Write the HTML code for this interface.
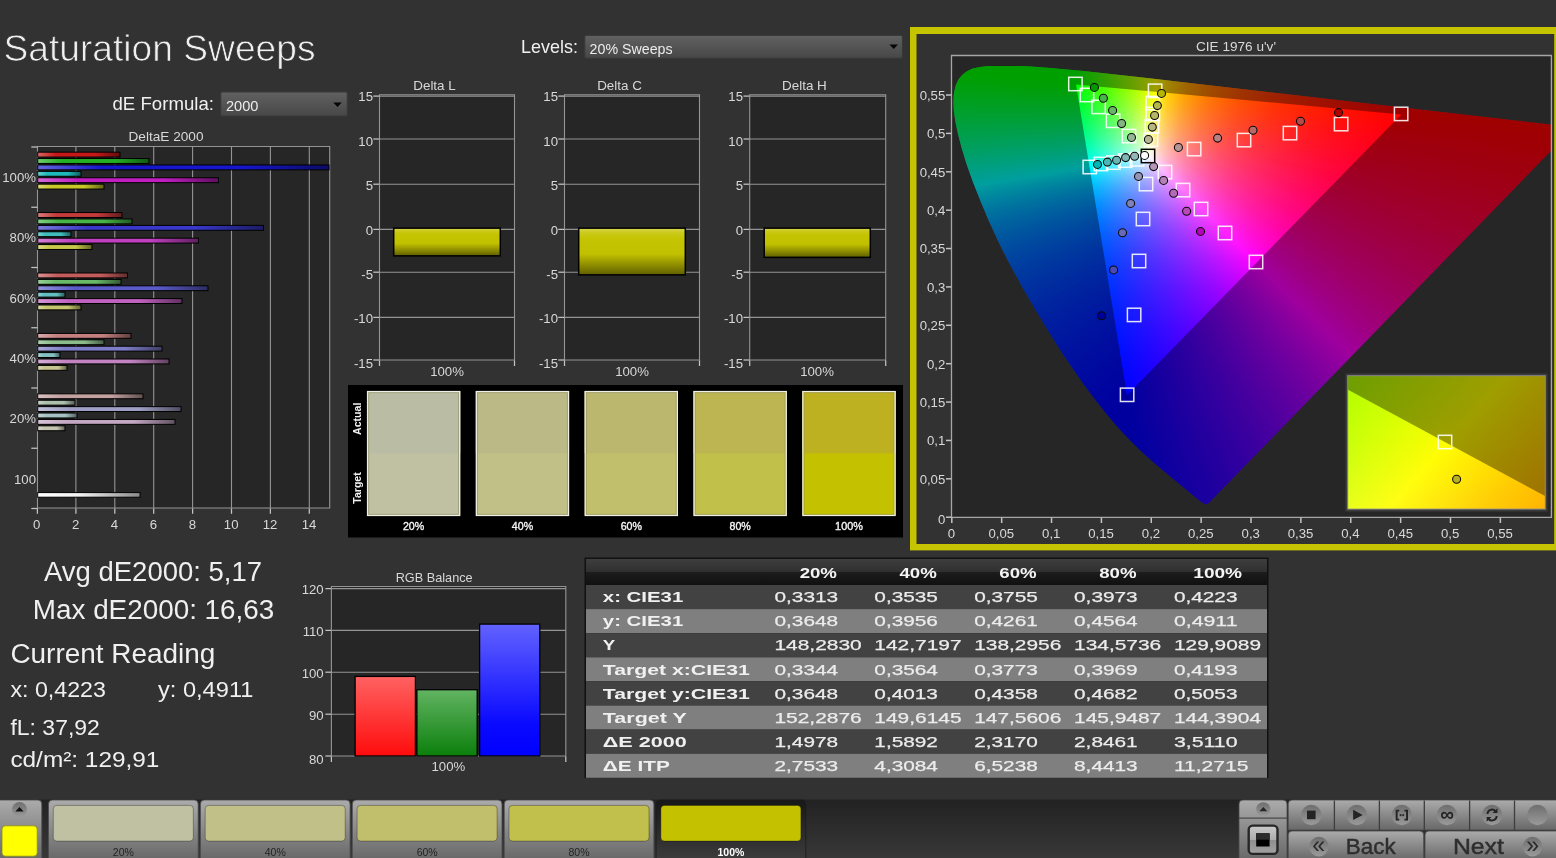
<!DOCTYPE html>
<html lang="en"><head><meta charset="utf-8"><title>Saturation Sweeps</title>
<style>
html,body{margin:0;padding:0}
body{width:1556px;height:858px;background:#323232;overflow:hidden;position:relative;font-family:"Liberation Sans",sans-serif}
.ciefill{position:absolute;overflow:hidden}
.ciefill i{display:block;height:1px}
svg{position:absolute;left:0;top:0;font-family:"Liberation Sans",sans-serif}
svg.top{will-change:transform}
</style></head><body>
<svg width="1556" height="858" viewBox="0 0 1556 858"><rect x="910" y="27" width="660" height="523.4" fill="#c6c300"/><rect x="916.5" y="34" width="637.7" height="510" fill="#323232"/><rect x="951.5" y="55.5" width="600" height="462" fill="#262626"/></svg>
<div class="ciefill" style="left:952px;top:66px;width:600px;height:438px;clip-path:polygon(256.2px 437.6px,255.4px 437.7px,254.9px 438.1px,252.8px 437.9px,248.4px 435.2px,241.6px 429.8px,205.5px 399.7px,193.8px 389.4px,183.8px 380.1px,172.7px 368.8px,164.1px 359.3px,154.4px 347.8px,143.7px 334.3px,132.4px 319.2px,120.5px 302.3px,108.1px 283.7px,95.4px 263.5px,82.6px 242.2px,69.9px 220.4px,57.8px 198.2px,52.0px 187.0px,46.6px 176.0px,36.7px 154.5px,28.1px 134.1px,20.6px 114.9px,14.4px 97.4px,9.6px 81.8px,6.0px 68.1px,3.5px 56.2px,1.9px 45.8px,1.4px 37.0px,1.7px 29.4px,2.1px 25.9px,3.6px 19.8px,5.8px 14.7px,7.2px 12.5px,10.4px 8.7px,14.2px 5.7px,16.3px 4.5px,20.7px 2.6px,28.0px 0.9px,35.9px 0.0px,47.1px -0.4px,64.2px -0.3px,79.0px 0.4px,98.4px 1.9px,131.6px 5.1px,186.2px 11.1px,621.8px 61.2px)"><i style="background:linear-gradient(90deg,#0f0 29px,#0f0 83px)"></i><i style="background:linear-gradient(90deg,#0f0 23px,#0f0 96px)"></i><i style="background:linear-gradient(90deg,#0f0 19px,#0f0 107px)"></i><i style="background:linear-gradient(90deg,#0f0 16px,#0f0 118px)"></i><i style="background:linear-gradient(90deg,#0f0 14px,#01ff00 123px,#0dff00 128px)"></i><i style="background:linear-gradient(90deg,#0f0 12px,#01ff00 123px,#26ff00 138px)"></i><i style="background:linear-gradient(90deg,#0f0 11px,#0f0 123px,#3eff00 147px)"></i><i style="background:linear-gradient(90deg,#0f0 9px,#0f0 123px,#5f0 155px,#57ff00 156px)"></i><i style="background:linear-gradient(90deg,#00ff02 8px,#0f0 123px,#51ff00 154px,#72ff00 165px)"></i><i style="background:linear-gradient(90deg,#00ff04 7px,#0f0 57px,#02ff00 124px,#57ff00 156px,#8fff00 174px)"></i><i style="background:linear-gradient(90deg,#00ff06 6px,#0f0 62px,#01ff00 124px,#57ff00 156px,#adff00 183px)"></i><i style="background:linear-gradient(90deg,#00ff08 6px,#0f0 70px,#01ff00 124px,#57ff00 156px,#b1ff00 184px,#ceff00 192px)"></i><i style="background:linear-gradient(90deg,#00ff09 5px,#0f0 79px,#01ff00 124px,#57ff00 156px,#adff00 183px,#f0ff00 201px)"></i><i style="background:linear-gradient(90deg,#00ff0b 4px,#0f0 90px,#0f0 124px,#53ff00 155px,#adff00 183px,#fffd00 205px,#fe0 209px)"></i><i style="background:linear-gradient(90deg,#00ff0d 3px,#0f0 100px,#0f0 124px,#53ff00 155px,#af0 182px,#fdff00 204px,#ffd000 218px)"></i><i style="background:linear-gradient(90deg,#00ff0f 3px,#0f0 110px,#02ff00 125px,#56ff00 156px,#aeff00 183px,#fdff00 204px,#ffc900 220px,#ffb700 227px)"></i><i style="background:linear-gradient(90deg,#0f1 3px,#0f0 121px,#01ff00 125px,#56ff00 156px,#aeff00 183px,#feff00 204px,#ffc900 220px,#ffa200 236px)"></i><i style="background:linear-gradient(90deg,#00ff13 2px,#01ff00 125px,#56ff00 156px,#aeff00 183px,#feff00 204px,#ffcb00 219px,#ff9f00 237px,#ff9100 244px)"></i><i style="background:linear-gradient(90deg,#00ff14 2px,#01ff01 125px,#56ff00 156px,#aeff00 183px,#ff0 204px,#ffce00 218px,#ffa100 236px,#ff8200 253px)"></i><i style="background:linear-gradient(90deg,#00ff16 1px,#00ff03 125px,#5f0 156px,#aeff00 183px,#ff0 204px,#ffd100 217px,#ffa500 234px,#ff7b00 257px,#ff7400 262px)"></i><i style="background:linear-gradient(90deg,#00ff18 1px,#00ff05 125px,#52ff00 155px,#af0 182px,#ff0 204px,#ffd000 217px,#ffa400 234px,#ff7b00 257px,#ff6900 270px)"></i><i style="background:linear-gradient(90deg,#00ff1a 1px,#02ff07 126px,#58ff01 157px,#b2ff00 184px,#fffe00 204px,#ffd000 217px,#ffa400 234px,#ff7a00 257px,#ff5e00 279px)"></i><i style="background:linear-gradient(90deg,#00ff1c 0px,#02ff0a 126px,#55ff04 156px,#aeff00 183px,#fffe00 204px,#ffcf00 217px,#ffa300 234px,#ff7a00 257px,#f50 288px)"></i><i style="background:linear-gradient(90deg,#00ff1d 0px,#01ff0c 126px,#55ff06 156px,#aeff00 183px,#fffd00 204px,#ffcf00 217px,#ffa300 234px,#ff7a00 257px,#ff5400 288px,#ff4d00 296px)"></i><i style="background:linear-gradient(90deg,#00ff1f 0px,#01ff0f 126px,#54ff09 156px,#abff03 182px,#fffd00 204px,#ffcf00 217px,#ffa300 234px,#ff7900 257px,#ff5400 288px,#ff4500 305px)"></i><i style="background:linear-gradient(90deg,#00ff21 0px,#0f1 126px,#54ff0b 156px,#abff06 182px,#fdff00 203px,#ffc800 219px,#ff9c00 237px,#ff7300 261px,#ff4f00 293px,#ff3e00 314px)"></i><i style="background:linear-gradient(90deg,#00ff23 0px,#00ff13 126px,#54ff0e 156px,#abff08 182px,#feff03 203px,#ffc800 219px,#ff9b00 237px,#ff7300 261px,#ff4f00 293px,#ff3700 323px)"></i><i style="background:linear-gradient(90deg,#00ff25 0px,#00ff16 126px,#4eff11 154px,#a4ff0c 180px,#feff06 203px,#ffca01 218px,#ff9f00 235px,#f70 258px,#ff5200 289px,#ff3200 331px)"></i><i style="background:linear-gradient(90deg,#00ff27 0px,#02ff18 127px,#57ff13 157px,#afff0e 183px,#feff09 203px,#ffcd04 217px,#ffa100 234px,#ff7800 257px,#ff5300 288px,#ff3200 331px,#ff2d00 340px)"></i><i style="background:linear-gradient(90deg,#00ff28 0px,#01ff1b 127px,#57ff16 157px,#afff11 183px,#ffff0c 203px,#ffcc07 217px,#ffa002 234px,#f70 257px,#ff5200 288px,#ff3100 331px,#ff2700 349px)"></i><i style="background:linear-gradient(90deg,#00ff2a 0px,#01ff1d 127px,#56ff19 157px,#afff14 183px,#ffff0f 203px,#ffcf0a 216px,#ffa205 233px,#ff7a00 255px,#f50 285px,#ff3400 327px,#ff2300 357px)"></i><i style="background:linear-gradient(90deg,#00ff2c 0px,#00ff20 127px,#56ff1b 157px,#afff17 183px,#fffe13 203px,#ffcf0d 216px,#ffa207 233px,#ff7902 255px,#ff5400 285px,#f30 327px,#ff1f00 366px)"></i><i style="background:linear-gradient(90deg,#00ff2e 0px,#0f2 127px,#56ff1e 157px,#afff1a 183px,#fffe16 203px,#ffce0f 216px,#ffa109 233px,#ff7904 255px,#ff5400 285px,#f30 327px,#ff1b00 375px)"></i><i style="background:linear-gradient(90deg,#00ff30 0px,#00ff25 127px,#4fff21 155px,#a8ff1d 181px,#fffe19 203px,#ffce12 216px,#ffa10c 233px,#ff7906 255px,#ff5400 285px,#f30 327px,#ff1700 383px)"></i><i style="background:linear-gradient(90deg,#00ff32 0px,#02ff27 128px,#56ff24 157px,#afff20 183px,#fffd1c 203px,#ffcd15 216px,#ffa00e 233px,#ff7808 255px,#ff5302 285px,#ff3200 327px,#ff1500 389px,#ff1400 392px)"></i><i style="background:linear-gradient(90deg,#00ff34 0px,#01ff2a 128px,#55ff26 157px,#acff23 182px,#fdff20 202px,#ffd719 213px,#ffa912 229px,#ff800b 250px,#ff5a05 278px,#ff3800 317px,#ff1a00 374px,#f10 401px)"></i><i style="background:linear-gradient(90deg,#00ff35 0px,#01ff2c 128px,#55ff29 157px,#acff26 182px,#fdff23 202px,#ffc619 218px,#ff9b12 235px,#ff730b 258px,#ff4f04 289px,#ff2e00 333px,#f10 398px,#ff0e00 409px)"></i><i style="background:linear-gradient(90deg,#00ff37 0px,#00ff2f 128px,#55ff2c 157px,#acff29 182px,#feff26 202px,#ffc91c 217px,#ff9d14 234px,#ff750d 256px,#ff5106 286px,#ff3000 329px,#ff1300 392px,#ff0b00 418px)"></i><i style="background:linear-gradient(90deg,#00ff39 0px,#00ff32 128px,#55ff2f 157px,#acff2c 182px,#feff2a 202px,#ffcc20 216px,#ff9f17 233px,#ff760f 255px,#ff5208 285px,#ff3102 327px,#ff1400 389px,#ff0800 427px)"></i><i style="background:linear-gradient(90deg,#00ff3b 0px,#00ff34 128px,#51ff32 156px,#a8ff2f 181px,#feff2d 202px,#ffcb22 216px,#ff9e19 233px,#ff7611 255px,#ff510a 285px,#ff3103 327px,#ff1400 389px,#ff0500 436px)"></i><i style="background:linear-gradient(90deg,#00ff3d 0px,#02ff37 129px,#58ff35 158px,#b0ff32 183px,#ffff30 202px,#ffce26 215px,#ffa21d 231px,#ff7a14 252px,#ff550c 281px,#ff3305 322px,#ff1600 382px,#ff0300 444px)"></i><i style="background:linear-gradient(90deg,#00ff3f 0px,#01ff39 129px,#57ff38 158px,#b0ff36 183px,#ffff34 202px,#ffd129 214px,#ffa41f 230px,#ff7b16 251px,#ff560e 280px,#ff3406 320px,#ff1700 379px,#ff0100 453px)"></i><i style="background:linear-gradient(90deg,#00ff41 0px,#01ff3c 129px,#54ff3b 157px,#acff39 182px,#fffe37 202px,#ffd02c 214px,#ffa422 230px,#ff7b18 251px,#ff550f 280px,#ff3407 320px,#ff1700 379px,#f00 459px,#f00 462px)"></i><i style="background:linear-gradient(90deg,#00ff43 0px,#01ff3f 129px,#54ff3e 157px,#acff3c 182px,#fffe3b 202px,#ffd02f 214px,#ffa324 230px,#ff7b1a 251px,#ff5611 279px,#ff3409 319px,#ff1702 377px,#f00 457px,#f00 470px)"></i><i style="background:linear-gradient(90deg,#00ff45 0px,#00ff42 129px,#54ff41 157px,#adff3f 182px,#fffd3e 202px,#ffcf32 214px,#ffa327 230px,#ff7a1c 251px,#ff5613 279px,#ff340a 319px,#ff1703 377px,#f00 456px,#f00 479px)"></i><i style="background:linear-gradient(90deg,#00ff47 0px,#0f4 129px,#50ff44 156px,#a9ff43 181px,#fffd41 202px,#ffcf35 214px,#ffa229 230px,#ff7a1e 251px,#ff5514 279px,#ff340b 319px,#ff1604 377px,#f00 456px,#f00 488px)"></i><i style="background:linear-gradient(90deg,#00ff49 0px,#02ff47 130px,#56ff47 158px,#adff46 182px,#fdff45 201px,#ffc836 216px,#ff9d2a 232px,#ff751f 254px,#ff5015 284px,#ff2f0b 326px,#ff1203 388px,#f00 458px,#f00 496px)"></i><i style="background:linear-gradient(90deg,#00ff4b 0px,#02ff4a 130px,#56ff4a 158px,#adff49 182px,#fdff49 201px,#ffc739 216px,#ff9d2d 232px,#ff7421 254px,#ff4f16 284px,#ff2f0d 326px,#ff1204 388px,#f00 457px,#f00 505px)"></i><i style="background:linear-gradient(90deg,#00ff4d 0px,#01ff4d 130px,#56ff4d 158px,#adff4d 182px,#feff4d 201px,#ffca3d 215px,#ff9f30 231px,#ff7724 252px,#ff5219 281px,#ff310f 322px,#ff1406 382px,#f00 455px,#f00 514px)"></i><i style="background:linear-gradient(90deg,#00ff4f 0px,#01ff4f 130px,#56ff50 158px,#adff50 182px,#feff50 201px,#ffca40 215px,#ff9e32 231px,#ff7626 252px,#ff521a 281px,#ff3110 322px,#ff1307 382px,#f00 454px,#f00 522px)"></i><i style="background:linear-gradient(90deg,#00ff51 0px,#00ff52 130px,#56ff53 158px,#adff53 182px,#ffff54 201px,#ffcd44 214px,#ffa035 230px,#ff7828 251px,#ff531c 279px,#ff3212 319px,#ff1508 378px,#ff0001 452px,#f00 531px)"></i><i style="background:linear-gradient(90deg,#00ff53 0px,#0f5 130px,#52ff56 157px,#a9ff57 181px,#ffff57 201px,#ffcf48 213px,#ffa238 229px,#ff792b 250px,#ff541e 278px,#ff3313 317px,#ff160a 375px,#ff0002 450px,#f00 540px)"></i><i style="background:linear-gradient(90deg,#0f5 0px,#00ff58 130px,#4bff59 155px,#a1ff5a 179px,#ffff5b 201px,#ffcf4b 213px,#ffa43c 228px,#ff7c2e 248px,#ff5721 275px,#ff3516 313px,#ff180b 369px,#ff0003 448px,#f00 549px)"></i><i style="background:linear-gradient(90deg,#00ff57 1px,#02ff5b 131px,#55ff5c 158px,#adff5e 182px,#fffe5f 201px,#ffcf4e 213px,#ffa33e 228px,#ff7b30 248px,#ff5623 275px,#ff3517 313px,#ff170c 369px,#ff0004 447px,#f00 557px)"></i><i style="background:linear-gradient(90deg,#00ff59 1px,#01ff5e 131px,#55ff5f 158px,#aeff61 182px,#fffe62 201px,#ffce51 213px,#ffa341 228px,#ff7b32 248px,#ff5625 275px,#ff3518 313px,#ff170d 369px,#ff0005 446px,#f00 562px,#f00 566px)"></i><i style="background:linear-gradient(90deg,#00ff5b 1px,#01ff61 131px,#55ff63 158px,#aeff65 182px,#fffd66 201px,#ffce54 213px,#ffa343 228px,#ff7a34 248px,#ff5626 275px,#ff341a 313px,#ff170e 369px,#ff0006 445px,#f00 567px,#f00 575px)"></i><i style="background:linear-gradient(90deg,#00ff5d 1px,#00ff64 131px,#54ff66 158px,#aeff68 182px,#fcff6a 200px,#ffef64 204px,#ffc052 217px,#ff9441 234px,#ff6d31 256px,#ff4a23 286px,#ff2a17 329px,#ff0e0c 393px,#ff0006 450px,#f00 577px,#f00 583px)"></i><i style="background:linear-gradient(90deg,#00ff5f 1px,#00ff67 131px,#54ff69 158px,#aeff6c 182px,#fdff6e 200px,#ffc657 215px,#ff9b46 231px,#ff7336 252px,#ff4e27 281px,#ff2e1a 322px,#ff110e 382px,#ff0007 447px,#f00 584px,#f00 592px)"></i><i style="background:linear-gradient(90deg,#00ff61 1px,#00ff6a 131px,#4dff6c 156px,#a6ff6f 180px,#fdff72 200px,#ffc95c 214px,#ff9c49 230px,#ff7438 251px,#ff5029 279px,#ff2f1c 319px,#ff1210 378px,#ff0008 446px,#f00 593px,#f00 600px)"></i><i style="background:linear-gradient(90deg,#00ff63 2px,#02ff6d 132px,#57ff70 159px,#aeff73 182px,#feff76 200px,#ffc85f 214px,#ff9c4c 230px,#ff743a 251px,#ff502b 279px,#ff2f1d 319px,#ff1211 378px,#ff0009 445px,#f00 600px)"></i><i style="background:linear-gradient(90deg,#00ff65 2px,#01ff70 132px,#57ff73 159px,#aeff77 182px,#feff7a 200px,#ffcb63 213px,#ffa050 228px,#ff783f 248px,#ff542f 275px,#ff3320 313px,#ff1513 369px,#ff000a 442px,#f00 600px)"></i><i style="background:linear-gradient(90deg,#00ff68 2px,#01ff73 132px,#57ff77 159px,#aeff7a 182px,#ffff7e 200px,#ffce68 212px,#ffa254 227px,#ff7942 247px,#ff5431 274px,#f32 312px,#ff1515 368px,#ff000a 441px,#f00 600px)"></i><i style="background:linear-gradient(90deg,#00ff6a 2px,#00ff76 132px,#53ff7a 158px,#aaff7e 181px,#ffff82 200px,#ffce6b 212px,#ffa257 227px,#ff7944 247px,#ff5433 274px,#ff3323 312px,#ff1516 368px,#ff000b 440px,#f00 600px)"></i><i style="background:linear-gradient(90deg,#00ff6c 2px,#00ff79 132px,#53ff7d 158px,#aaff82 181px,#fffe85 200px,#ffcd6e 212px,#ffa159 227px,#ff7846 247px,#ff5334 274px,#ff3225 312px,#ff1517 368px,#ff000c 439px,#f00 600px)"></i><i style="background:linear-gradient(90deg,#00ff6e 3px,#00ff7c 132px,#4fff80 157px,#a6ff85 180px,#fffe89 200px,#ffd073 211px,#ffa35d 226px,#ff7b4a 245px,#ff5638 271px,#ff3527 308px,#ff1719 362px,#ff000d 436px,#ff0001 600px)"></i><i style="background:linear-gradient(90deg,#00ff70 3px,#02ff7f 133px,#56ff84 159px,#afff89 182px,#fffd8d 200px,#ffd076 211px,#ffa360 226px,#ff7b4c 245px,#ff5639 271px,#ff3429 308px,#ff171a 362px,#ff000e 436px,#ff0001 600px)"></i><i style="background:linear-gradient(90deg,#00ff72 3px,#01ff83 133px,#56ff88 159px,#afff8d 182px,#fffd91 200px,#ffcf7a 211px,#ffa262 226px,#ff7a4e 245px,#ff563b 271px,#ff342a 308px,#ff161b 362px,#ff000f 435px,#ff0002 600px)"></i><i style="background:linear-gradient(90deg,#00ff75 3px,#01ff86 133px,#56ff8b 159px,#afff91 182px,#fdff96 199px,#ffea8b 204px,#ffbb72 217px,#ff915d 233px,#ff6a48 255px,#ff4735 285px,#ff2725 328px,#ff0b16 392px,#ff000f 439px,#ff0002 600px)"></i><i style="background:linear-gradient(90deg,#0f7 4px,#01ff89 133px,#55ff8f 159px,#afff95 182px,#fdff9a 199px,#ffc77c 213px,#ff9c65 228px,#ff7450 248px,#ff503c 275px,#ff302b 313px,#ff131c 369px,#f01 435px,#ff0003 600px)"></i><i style="background:linear-gradient(90deg,#00ff79 4px,#00ff8c 133px,#55ff92 159px,#abff98 181px,#fdff9e 199px,#ffca81 212px,#ff9e69 227px,#ff7653 247px,#ff513f 274px,#ff302d 312px,#ff131d 368px,#ff0012 434px,#ff0003 600px)"></i><i style="background:linear-gradient(90deg,#00ff7b 4px,#00ff8f 133px,#4eff95 157px,#a7ff9c 180px,#feffa3 199px,#ffca85 212px,#ff9e6c 227px,#ff7555 247px,#ff5141 274px,#ff302e 312px,#ff131e 368px,#ff0013 433px,#ff0004 600px)"></i><i style="background:linear-gradient(90deg,#00ff7d 4px,#00ff93 133px,#46ff98 155px,#9eff9f 178px,#f9ffa7 198px,#feffa7 199px,#ffcd8a 211px,#ffa070 226px,#ff7859 245px,#ff5344 271px,#ff3231 308px,#ff1520 362px,#ff0014 431px,#ff0004 600px)"></i><i style="background:linear-gradient(90deg,#00ff80 5px,#00ff96 132px,#05ff97 135px,#58ff9d 160px,#b0ffa5 182px,#ffffab 199px,#ffd090 210px,#ffa476 224px,#ff7b5e 243px,#ff5748 268px,#ff3535 303px,#ff1823 355px,#ff0015 428px,#ff0005 600px)"></i><i style="background:linear-gradient(90deg,#00ff82 5px,#0f9 130px,#01ff9a 134px,#54ffa1 159px,#abffa8 181px,#ffffaf 199px,#ffcf93 210px,#ffa479 224px,#ff7b60 243px,#ff564a 268px,#ff3536 303px,#ff1724 355px,#ff0016 427px,#ff0005 600px)"></i><i style="background:linear-gradient(90deg,#00ff84 5px,#00ff9b 128px,#01ff9d 134px,#54ffa5 159px,#abffac 181px,#fffeb4 199px,#ffcf96 210px,#ffa37c 224px,#ff7a62 243px,#ff564c 268px,#ff3437 304px,#ff1725 356px,#ff0017 427px,#ff0006 600px)"></i><i style="background:linear-gradient(90deg,#00ff87 5px,#00ff9e 126px,#00ffa0 134px,#54ffa8 159px,#acffb1 181px,#fffeb8 199px,#ffce9a 210px,#ffa37e 224px,#ff7a65 243px,#ff554e 268px,#ff3439 304px,#ff1626 356px,#ff0018 426px,#ff0007 600px)"></i><i style="background:linear-gradient(90deg,#00ff89 6px,#00ffa1 124px,#00ffa4 134px,#50ffac 158px,#a7ffb4 180px,#fffdbc 199px,#ffce9d 210px,#ffa281 224px,#ff7967 243px,#ff5550 268px,#ff333a 304px,#ff1627 356px,#ff0019 425px,#ff0007 596px,#ff0007 600px)"></i><i style="background:linear-gradient(90deg,#00ff8b 6px,#00ffa4 122px,#00ffa7 134px,#48ffaf 156px,#9fffb7 178px,#f7ffc1 197px,#fffdc0 199px,#ffcda1 210px,#ffa284 224px,#ff7969 243px,#ff5451 268px,#ff333b 304px,#ff1628 356px,#ff001a 424px,#ff0008 592px,#ff0008 600px)"></i><i style="background:linear-gradient(90deg,#00ff8e 6px,#00ffa6 120px,#02ffab 135px,#57ffb4 160px,#b0ffbd 182px,#fdffc6 198px,#ffe9b7 203px,#ffbc99 215px,#ff907c 231px,#ff6962 252px,#ff464a 281px,#ff2735 322px,#ff0b22 384px,#ff001a 428px,#ff0008 597px,#ff0008 600px)"></i><i style="background:linear-gradient(90deg,#00ff90 6px,#00ffa9 118px,#01ffae 135px,#57ffb8 160px,#b0ffc2 182px,#fdffca 198px,#ffc9a5 211px,#ff9e88 225px,#ff766d 244px,#ff5154 270px,#ff313d 306px,#ff142a 359px,#ff001b 424px,#ff0009 587px,#ff0009 600px)"></i><i style="background:linear-gradient(90deg,#00ff93 7px,#00ffac 117px,#01ffb2 135px,#56ffbc 160px,#acffc5 181px,#feffcf 198px,#ffc8a9 211px,#ff9e8b 225px,#ff756f 244px,#ff5155 270px,#ff303f 306px,#ff132a 360px,#ff001c 423px,#ff000a 584px,#ff0009 600px)"></i><i style="background:linear-gradient(90deg,#00ff95 7px,#00ffaf 115px,#00ffb5 135px,#56ffc0 160px,#acffca 181px,#feffd3 198px,#ffcbaf 210px,#ffa090 224px,#ff7773 243px,#ff5359 268px,#ff3141 304px,#ff142c 357px,#ff001d 422px,#ff000b 580px,#ff000a 600px)"></i><i style="background:linear-gradient(90deg,#00ff97 7px,#00ffb2 114px,#00ffb9 135px,#52ffc3 159px,#a8ffce 180px,#feffd8 198px,#ffcfb5 209px,#ffa295 223px,#ff7a78 241px,#ff555d 266px,#f34 301px,#ff162f 352px,#ff001f 419px,#ff000c 572px,#ff000a 600px)"></i><i style="background:linear-gradient(90deg,#00ff9a 8px,#00ffb4 113px,#00ffbd 135px,#4affc6 157px,#a3ffd1 179px,#ffd 198px,#ffceb9 209px,#ffa198 223px,#ff797a 241px,#ff545e 266px,#ff3346 301px,#ff1630 352px,#ff0020 419px,#ff000d 570px,#ff000b 600px)"></i><i style="background:linear-gradient(90deg,#00ff9c 8px,#00ffb7 111px,#02ffc1 136px,#5fc 160px,#adffd7 181px,#ffffe1 198px,#ffcdbc 209px,#ffa19b 223px,#ff797c 241px,#ff5460 266px,#ff3247 301px,#ff1531 352px,#ff0021 418px,#ff000e 567px,#ff000b 600px)"></i><i style="background:linear-gradient(90deg,#00ff9f 8px,#00ffba 110px,#01ffc4 136px,#55ffd0 160px,#adffdb 181px,#fffee6 198px,#ffcdc0 209px,#ffa09e 223px,#ff787f 241px,#ff5362 266px,#ff3249 301px,#ff1532 352px,#f02 417px,#ff000f 563px,#ff000c 600px)"></i><i style="background:linear-gradient(90deg,#00ffa1 9px,#00ffbd 109px,#01ffc8 136px,#55ffd4 160px,#adffe0 181px,#fffeea 198px,#ffccc4 209px,#ffa0a1 223px,#ff7881 241px,#ff5364 266px,#ff324a 301px,#ff1534 352px,#ff0023 416px,#ff000f 560px,#ff000c 600px)"></i><i style="background:linear-gradient(90deg,#00ffa4 9px,#00ffc0 108px,#0fc 136px,#55ffd8 160px,#adffe4 181px,#fffdef 198px,#ffccc7 209px,#ff9fa4 223px,#ff7784 241px,#ff5266 266px,#ff314c 301px,#ff1435 352px,#ff0024 415px,#ff0010 556px,#ff000d 599px)"></i><i style="background:linear-gradient(90deg,#00ffa6 9px,#00ffc2 106px,#00ffcf 136px,#51ffdb 159px,#a8ffe8 180px,#fcfff5 197px,#fff2eb 200px,#ffc4c5 211px,#ff9aa2 225px,#ff7282 244px,#ff4d64 270px,#ff2d4a 307px,#ff1033 361px,#ff0024 417px,#f01 558px,#ff000d 598px)"></i><i style="background:linear-gradient(90deg,#00ffa9 9px,#00ffc5 105px,#00ffd3 136px,#49ffde 157px,#9fffeb 178px,#fdfffa 197px,#ffe4e3 203px,#ffb6bd 215px,#ff8b9a 231px,#ff647a 252px,#ff415d 281px,#ff2243 323px,#ff072c 386px,#ff0025 419px,#f01 561px,#ff000e 597px)"></i><i style="background:linear-gradient(90deg,#00ffab 10px,#00ffc8 104px,#02ffd7 137px,#58ffe5 161px,#b2fff3 182px,#fdffff 197px,#ffc7cf 210px,#ff9bab 224px,#ff7288 243px,#ff4f6a 268px,#ff2e4f 304px,#ff1136 357px,#ff0027 414px,#ff0013 550px,#ff000f 596px)"></i><i style="background:linear-gradient(90deg,#00ffae 10px,#00ffcb 103px,#01ffdb 137px,#58ffe9 161px,#adfff7 181px,#ecfdff 194px,#fefaff 198px,#ffc6d3 210px,#ff9aae 224px,#ff728b 243px,#ff4e6c 268px,#ff2e50 304px,#ff1137 357px,#ff0028 413px,#ff0014 547px,#ff000f 595px)"></i><i style="background:linear-gradient(90deg,#00ffb0 10px,#00ffce 102px,#01ffdf 137px,#53ffed 160px,#a9fffb 180px,#d6fbff 190px,#fef4ff 199px,#ffbed0 212px,#ff92aa 227px,#ff6b87 247px,#ff4768 274px,#ff274c 313px,#ff0b34 371px,#ff0028 414px,#ff0014 547px,#ff0010 594px)"></i><i style="background:linear-gradient(90deg,#00ffb3 11px,#00ffd1 101px,#00ffe3 137px,#53fff1 160px,#b1fdff 182px,#feeeff 200px,#ffbad1 213px,#ff8fab 228px,#ff6888 248px,#ff4669 275px,#ff264d 314px,#ff0b35 372px,#ff0029 413px,#ff0015 544px,#ff0010 593px)"></i><i style="background:linear-gradient(90deg,#00ffb6 11px,#00ffd4 100px,#00ffe7 137px,#53fff5 160px,#95fdff 176px,#fee9ff 201px,#ffb6d1 214px,#ff8dac 229px,#ff6689 249px,#ff4369 277px,#ff244d 317px,#ff0834 377px,#ff002a 413px,#ff0016 543px,#f01 592px)"></i><i style="background:linear-gradient(90deg,#00ffb8 11px,#00ffd7 99px,#00ffeb 137px,#4bfff8 158px,#7ffcff 171px,#fee4ff 202px,#ffafcf 216px,#ff85a8 232px,#ff6086 253px,#ff3e66 282px,#ff1f4a 324px,#ff0532 388px,#ff002b 416px,#ff0016 547px,#ff0012 591px)"></i><i style="background:linear-gradient(90deg,#0fb 12px,#00ffda 99px,#00ffef 137px,#43fffb 156px,#6dfbff 167px,#fedfff 203px,#ffaccf 217px,#ff83a9 233px,#ff5c85 255px,#ff3b66 285px,#ff1c49 329px,#ff0231 396px,#ff001b 511px,#ff0012 590px)"></i><i style="background:linear-gradient(90deg,#00ffbe 12px,#0fd 98px,#02fff3 138px,#4afdff 158px,#e5deff 198px,#fedaff 204px,#ffa8d0 218px,#ff80aa 234px,#ff5b86 256px,#ff3866 287px,#ff1a49 332px,#ff0030 401px,#ff001a 518px,#ff0013 589px)"></i><i style="background:linear-gradient(90deg,#00ffc0 12px,#00ffe0 97px,#01fff7 138px,#36fcff 153px,#d1deff 194px,#fed5ff 205px,#ffa4d0 219px,#ff7ba9 236px,#ff5684 259px,#ff3564 291px,#ff1747 338px,#ff0030 403px,#ff001b 521px,#ff0013 588px)"></i><i style="background:linear-gradient(90deg,#00ffc3 13px,#00ffe3 96px,#01fffb 138px,#2afaff 150px,#c6dbff 192px,#fed0ff 206px,#ff9ece 221px,#ff77a7 238px,#ff5283 262px,#ff3163 295px,#ff1446 344px,#ff0031 404px,#ff001b 521px,#ff0014 587px)"></i><i style="background:linear-gradient(90deg,#00ffc6 13px,#00ffe6 95px,#0ff 138px,#99e0ff 181px,#fecbff 207px,#ff9bcf 222px,#ff73a6 240px,#ff4f82 264px,#ff2e62 298px,#ff1245 348px,#ff0032 404px,#ff001c 520px,#ff0015 586px)"></i><i style="background:linear-gradient(90deg,#00ffc8 13px,#00ffea 95px,#00fdff 134px,#00faff 138px,#8bdeff 178px,#fec7ff 208px,#ff98cf 223px,#ff70a7 241px,#ff4d83 265px,#ff2d63 299px,#ff1146 349px,#f03 403px,#ff001d 517px,#ff0015 585px)"></i><i style="background:linear-gradient(90deg,#00ffcb 14px,#00ffed 94px,#00fdff 128px,#02f6ff 139px,#9bd7ff 183px,#fec2ff 209px,#ff92cd 225px,#ff6ca6 243px,#ff4982 268px,#ff2a61 303px,#ff0e45 355px,#ff0034 403px,#ff001e 516px,#ff0016 584px)"></i><i style="background:linear-gradient(90deg,#00ffce 14px,#00fff0 93px,#00fdff 122px,#02f2ff 139px,#9cd2ff 184px,#febeff 210px,#ff8fce 226px,#ff68a5 245px,#ff4681 270px,#ff2761 306px,#ff0c44 359px,#ff0035 403px,#ff001f 515px,#ff0017 583px)"></i><i style="background:linear-gradient(90deg,#00ffd1 14px,#00fff3 92px,#00fdff 116px,#01eeff 139px,#9acfff 184px,#febaff 211px,#ff8cce 227px,#ff66a6 246px,#ff4481 272px,#ff2661 308px,#ff0b44 362px,#ff0036 402px,#ff0020 513px,#ff0017 582px)"></i><i style="background:linear-gradient(90deg,#00ffd4 15px,#00fff6 92px,#00fdff 111px,#01ebff 139px,#9bcaff 185px,#feb6ff 212px,#ff89ce 228px,#ff64a6 247px,#ff4282 273px,#ff2461 310px,#ff0a44 364px,#ff0038 401px,#ff0021 510px,#ff0018 581px)"></i><i style="background:linear-gradient(90deg,#00ffd6 15px,#00fff9 91px,#00fcff 106px,#00e7ff 139px,#99c7ff 185px,#feb2ff 213px,#ff84cc 230px,#ff60a5 249px,#ff4081 275px,#ff2261 312px,#ff0844 367px,#ff0039 401px,#f02 509px,#ff0019 580px)"></i><i style="background:linear-gradient(90deg,#00ffda 16px,#00fffd 91px,#00f4ff 113px,#00e3ff 139px,#8fc5ff 183px,#feaeff 214px,#ff81cd 231px,#ff5da4 251px,#ff3c80 278px,#ff2060 316px,#ff0643 372px,#ff0039 401px,#f02 508px,#ff0019 579px)"></i><i style="background:linear-gradient(90deg,#00ffdc 16px,#00fdff 92px,#00e0ff 139px,#83c4ff 180px,#feaaff 215px,#ff7ecd 232px,#ff5ba5 252px,#ff3b81 279px,#ff1f60 317px,#ff0644 373px,#ff003b 400px,#ff0023 506px,#ff001a 578px)"></i><i style="background:linear-gradient(90deg,#00ffdf 16px,#00fdff 86px,#02dcff 140px,#9cbbff 188px,#fea6ff 216px,#ff7bce 233px,#ff59a6 253px,#ff3a82 280px,#ff1e61 318px,#ff0544 375px,#ff003b 401px,#ff0024 507px,#ff001b 577px)"></i><i style="background:linear-gradient(90deg,#00ffe2 17px,#00fdff 80px,#01d9ff 140px,#9ab8ff 188px,#fea3ff 217px,#ff79ce 234px,#ff57a6 254px,#ff3882 281px,#ff1d62 319px,#ff0445 376px,#ff003c 401px,#ff0025 506px,#ff001b 576px)"></i><i style="background:linear-gradient(90deg,#00ffe5 17px,#00fdff 74px,#01d6ff 140px,#9bb4ff 189px,#ff9dfd 219px,#ff78d1 234px,#ff56a9 254px,#ff3884 281px,#ff1c63 319px,#ff0446 375px,#ff003e 400px,#ff0026 503px,#ff001c 575px)"></i><i style="background:linear-gradient(90deg,#00ffe8 17px,#00fdff 68px,#00d2ff 140px,#98b1ff 189px,#ff9afd 220px,#ff76d2 235px,#ff54a9 255px,#ff3685 282px,#ff1b64 320px,#ff0347 376px,#ff003e 402px,#ff0026 506px,#ff001d 574px)"></i><i style="background:linear-gradient(90deg,#00ffeb 18px,#00fdff 63px,#00cfff 140px,#93afff 188px,#ff96fd 221px,#ff73d2 236px,#ff53aa 256px,#ff3586 283px,#ff1a65 321px,#ff0348 377px,#ff003d 408px,#ff0025 515px,#ff001d 574px)"></i><i style="background:linear-gradient(90deg,#0fe 18px,#00fdff 57px,#0cf 140px,#87afff 185px,#ff93fd 222px,#ff71d2 237px,#ff51ab 257px,#ff3486 284px,#ff1a66 322px,#ff0248 378px,#ff002f 465px,#ff001e 573px)"></i><i style="background:linear-gradient(90deg,#00fff1 18px,#00fdff 51px,#02c9ff 141px,#9ba7ff 192px,#ff90fd 223px,#ff6cd0 239px,#ff4ca8 260px,#ff3084 288px,#ff1663 328px,#ff0046 387px,#ff002d 479px,#ff001e 572px)"></i><i style="background:linear-gradient(90deg,#00fff4 19px,#00fdff 45px,#01c6ff 141px,#99a4ff 192px,#ff8cfd 224px,#ff6ad1 240px,#ff4ba9 261px,#ff2e83 290px,#ff1563 330px,#ff0047 386px,#ff002e 477px,#ff001f 571px)"></i><i style="background:linear-gradient(90deg,#00fff7 19px,#00fcff 40px,#01c3ff 141px,#9aa1ff 193px,#ff89fd 225px,#ff68d1 241px,#ff49a9 262px,#ff2d84 291px,#ff1363 332px,#ff0048 386px,#ff002f 476px,#ff0020 570px)"></i><i style="background:linear-gradient(90deg,#00fffb 20px,#00fbff 36px,#00c0ff 141px,#9b9eff 194px,#ff86fd 226px,#ff65d2 242px,#ff47aa 263px,#ff2b85 292px,#ff1264 333px,#ff004a 385px,#ff0030 474px,#ff0021 569px)"></i><i style="background:linear-gradient(90deg,#00fffe 20px,#00cbff 119px,#00beff 141px,#969cff 193px,#ff83fd 227px,#ff63d2 243px,#ff46aa 264px,#ff2a86 293px,#ff1264 334px,#ff004b 385px,#ff0031 473px,#ff0021 568px)"></i><i style="background:linear-gradient(90deg,#00fdff 20px,#0bf 141px,#8b9cff 190px,#ff80fd 228px,#ff61d2 244px,#ff43a9 266px,#ff2884 296px,#ff0f63 338px,#ff004c 385px,#ff0032 473px,#f02 567px)"></i><i style="background:linear-gradient(90deg,#00faff 21px,#02b8ff 142px,#9b95ff 196px,#ff7dfd 229px,#ff5dd1 246px,#ff40a8 268px,#ff2684 298px,#ff0e63 340px,#ff004d 384px,#f03 470px,#ff0023 566px)"></i><i style="background:linear-gradient(90deg,#00f7ff 21px,#01b5ff 142px,#9c92ff 197px,#ff7bfd 230px,#ff5bd1 247px,#ff3fa9 269px,#ff2585 299px,#ff0d64 341px,#ff004f 383px,#ff0034 468px,#ff0023 565px)"></i><i style="background:linear-gradient(90deg,#00f4ff 21px,#01b3ff 142px,#9a90ff 197px,#ff78fd 231px,#ff59d1 248px,#ff3daa 270px,#ff2385 300px,#ff0c64 343px,#ff0050 382px,#ff0036 466px,#ff0024 564px)"></i><i style="background:linear-gradient(90deg,#00f1ff 22px,#00b0ff 142px,#9b8dff 198px,#ff75fd 232px,#ff57d2 249px,#ff3aa9 272px,#ff2184 303px,#ff0a63 347px,#ff0051 382px,#ff0037 465px,#ff0025 563px)"></i><i style="background:linear-gradient(90deg,#0ef 22px,#00aeff 142px,#968cff 197px,#ff72fd 233px,#ff55d2 250px,#ff39a9 273px,#ff2085 304px,#ff0963 348px,#ff0053 381px,#ff0038 463px,#ff0025 562px)"></i><i style="background:linear-gradient(90deg,#00ebff 23px,#02abff 143px,#9c87ff 200px,#ff70fd 234px,#ff53d2 251px,#ff37aa 274px,#ff1f85 305px,#ff0964 349px,#ff0054 380px,#ff0039 461px,#ff0026 561px)"></i><i style="background:linear-gradient(90deg,#00e9ff 23px,#02a9ff 143px,#9a85ff 200px,#ff6dfd 235px,#ff4fd1 253px,#ff35a9 276px,#ff1d84 308px,#ff0763 353px,#f05 380px,#ff003a 461px,#ff0027 560px)"></i><i style="background:linear-gradient(90deg,#00e6ff 23px,#01a6ff 143px,#9b83ff 201px,#ff6bfd 236px,#ff4dd1 254px,#ff33a8 278px,#ff1b84 310px,#ff0663 355px,#ff0056 380px,#ff003b 460px,#ff0028 559px)"></i><i style="background:linear-gradient(90deg,#00e3ff 24px,#01a4ff 143px,#9981ff 201px,#ff68fe 237px,#ff4cd1 255px,#ff31a9 279px,#ff1a84 311px,#ff0564 356px,#ff0057 380px,#ff003c 459px,#ff0028 558px)"></i><i style="background:linear-gradient(90deg,#00e0ff 24px,#00a2ff 143px,#9a7eff 202px,#ff66fe 238px,#ff4ad2 256px,#ff30a9 280px,#ff1884 313px,#ff0463 359px,#ff0057 384px,#ff003b 465px,#ff0029 557px)"></i><i style="background:linear-gradient(90deg,#00deff 25px,#00a0ff 143px,#987cff 202px,#ff63fe 239px,#ff48d2 257px,#ff2faa 281px,#ff1785 314px,#ff0364 360px,#f05 390px,#ff003a 474px,#ff002a 556px)"></i><i style="background:linear-gradient(90deg,#00dbff 25px,#029dff 144px,#9c79ff 204px,#ff61fe 240px,#ff46d2 258px,#ff2daa 282px,#ff1685 315px,#ff0264 361px,#ff0047 429px,#ff002e 535px,#ff002b 555px)"></i><i style="background:linear-gradient(90deg,#00d9ff 25px,#029bff 144px,#9a77ff 204px,#ff5ffe 241px,#ff43d1 260px,#ff2aa8 285px,#ff1483 319px,#ff0062 367px,#ff0045 438px,#ff002c 549px,#ff002b 554px)"></i><i style="background:linear-gradient(90deg,#00d6ff 26px,#0199ff 144px,#9b75ff 205px,#ff5cfe 242px,#ff41d1 261px,#ff29a8 286px,#ff1384 320px,#ff0063 368px,#ff0046 439px,#ff002d 550px,#ff002c 553px)"></i><i style="background:linear-gradient(90deg,#00d4ff 26px,#0197ff 144px,#9c72ff 206px,#ff5afe 243px,#ff40d1 262px,#ff28a9 287px,#ff1284 321px,#ff0063 369px,#ff0046 440px,#ff002d 550px,#ff002d 552px)"></i><i style="background:linear-gradient(90deg,#00d1ff 27px,#0095ff 144px,#9a71ff 206px,#ff58fe 244px,#ff3ed2 263px,#ff27a9 288px,#ff1185 322px,#ff0065 368px,#ff0048 438px,#ff002e 547px,#ff002e 551px)"></i><i style="background:linear-gradient(90deg,#00cfff 27px,#0093ff 144px,#9b6eff 207px,#ff56fe 245px,#ff3cd2 264px,#ff25aa 289px,#ff1085 323px,#ff0067 367px,#ff0049 436px,#ff0030 543px,#ff002e 550px)"></i><i style="background:linear-gradient(90deg,#0cf 27px,#0291ff 145px,#9c6cff 208px,#ff54fe 246px,#ff3bd2 265px,#ff24aa 290px,#ff0f86 324px,#ff0068 366px,#ff004b 434px,#ff0031 539px,#ff002f 549px)"></i><i style="background:linear-gradient(90deg,#00caff 28px,#028fff 145px,#9c6aff 209px,#ff51fe 247px,#ff38d1 267px,#ff21a8 293px,#ff0d84 328px,#ff006a 366px,#ff004c 433px,#ff0032 537px,#ff0030 548px)"></i><i style="background:linear-gradient(90deg,#00c8ff 28px,#018dff 145px,#9b68ff 209px,#ff4ffe 248px,#ff37d1 268px,#ff20a9 294px,#ff0c84 330px,#ff006b 365px,#ff004d 432px,#f03 534px,#ff0031 547px)"></i><i style="background:linear-gradient(90deg,#00c5ff 29px,#018bff 145px,#9b66ff 210px,#ff4dfe 249px,#ff35d1 269px,#ff1fa9 295px,#ff0b84 331px,#ff006d 364px,#ff004f 430px,#ff0034 531px,#ff0032 546px)"></i><i style="background:linear-gradient(90deg,#00c3ff 29px,#0089ff 145px,#9a64ff 210px,#ff4bfe 250px,#ff34d2 270px,#ff1eaa 296px,#ff0a85 332px,#ff006e 364px,#ff0050 429px,#ff0036 528px,#ff0032 545px)"></i><i style="background:linear-gradient(90deg,#00c1ff 30px,#08f 145px,#9a62ff 211px,#ff49fe 251px,#ff32d2 271px,#ff1ca9 298px,#ff0985 334px,#ff0070 363px,#ff0052 427px,#ff0037 525px,#f03 544px)"></i><i style="background:linear-gradient(90deg,#00bfff 30px,#0285ff 146px,#9b60ff 212px,#ff47fe 252px,#ff31d2 272px,#ff1baa 299px,#ff0884 336px,#ff0072 362px,#ff0053 425px,#ff0038 521px,#ff0034 543px)"></i><i style="background:linear-gradient(90deg,#00bdff 30px,#0284ff 146px,#9c5eff 213px,#ff45fe 253px,#ff2fd3 273px,#ff1aaa 300px,#ff0785 337px,#ff0073 362px,#ff0054 425px,#ff0039 520px,#ff0035 542px)"></i><i style="background:linear-gradient(90deg,#00baff 31px,#0182ff 146px,#9a5dff 213px,#ff44fe 254px,#ff2dd1 275px,#ff18a9 302px,#ff0685 339px,#ff0074 362px,#f05 425px,#ff003a 520px,#ff0036 541px)"></i><i style="background:linear-gradient(90deg,#00b8ff 31px,#0180ff 146px,#9b5bff 214px,#ff42fe 255px,#ff2bd1 276px,#ff17a8 304px,#ff0484 342px,#ff0075 363px,#ff0056 426px,#ff003a 521px,#ff0036 541px)"></i><i style="background:linear-gradient(90deg,#00b6ff 32px,#007fff 146px,#9959ff 214px,#ff40fe 256px,#ff2ad2 277px,#ff16a9 305px,#ff0384 343px,#ff0074 366px,#f05 430px,#ff003a 527px,#ff0037 540px)"></i><i style="background:linear-gradient(90deg,#00b4ff 32px,#007dff 146px,#9a57ff 215px,#ff3efe 257px,#ff29d2 278px,#ff15a9 306px,#ff0385 344px,#ff006f 377px,#ff0050 446px,#ff0038 539px)"></i><i style="background:linear-gradient(90deg,#00b2ff 33px,#027bff 147px,#9b56ff 216px,#ff3cfe 258px,#ff27d2 279px,#ff14aa 307px,#ff0285 345px,#ff0064 399px,#ff0047 478px,#ff0039 538px)"></i><i style="background:linear-gradient(90deg,#00b0ff 33px,#027aff 147px,#9c54ff 217px,#ff3bfe 259px,#ff26d3 280px,#ff13aa 308px,#ff0186 346px,#ff0065 400px,#ff0047 479px,#ff0039 537px)"></i><i style="background:linear-gradient(90deg,#00aeff 33px,#0178ff 147px,#9a52ff 217px,#ff39fe 260px,#ff24d1 282px,#ff10a8 311px,#ff0084 350px,#ff0063 405px,#ff0046 486px,#ff003a 536px)"></i><i style="background:linear-gradient(90deg,#00acff 34px,#0177ff 147px,#9b51ff 218px,#ff37fe 261px,#ff22d1 283px,#ff10a9 312px,#ff0084 351px,#ff0064 406px,#ff0047 487px,#ff003b 535px)"></i><i style="background:linear-gradient(90deg,#0af 34px,#0175ff 147px,#9b4fff 219px,#ff36fe 262px,#ff21d2 284px,#ff0fa9 313px,#ff0086 351px,#ff0065 406px,#ff0047 487px,#ff003c 534px)"></i><i style="background:linear-gradient(90deg,#00a8ff 35px,#0074ff 147px,#9a4eff 219px,#ff34fe 263px,#ff20d2 285px,#ff0eaa 314px,#f08 350px,#ff0067 404px,#ff0049 483px,#ff003d 533px)"></i><i style="background:linear-gradient(90deg,#00a7ff 35px,#0272ff 148px,#9d4bff 221px,#ff32fe 264px,#ff1fd2 286px,#ff0daa 315px,#ff008a 349px,#ff0068 403px,#ff004a 482px,#ff003e 532px)"></i><i style="background:linear-gradient(90deg,#00a5ff 36px,#0270ff 148px,#9b4aff 221px,#ff31fe 265px,#ff1dd3 287px,#ff0ba9 317px,#ff008c 348px,#ff006a 401px,#ff004c 478px,#ff003f 531px)"></i><i style="background:linear-gradient(90deg,#00a3ff 36px,#016fff 148px,#9c48ff 222px,#ff2ffe 266px,#ff1cd1 289px,#ff0aa9 319px,#ff008e 347px,#ff006c 399px,#ff004e 475px,#ff003f 530px)"></i><i style="background:linear-gradient(90deg,#00a1ff 36px,#016eff 148px,#9a47ff 222px,#ff2efe 267px,#ff1ad2 290px,#ff09a9 320px,#ff008f 347px,#ff006d 399px,#ff004f 474px,#ff0040 529px)"></i><i style="background:linear-gradient(90deg,#009fff 37px,#016cff 148px,#9b46ff 223px,#ff2cfe 268px,#ff19d2 291px,#ff08aa 321px,#ff0091 346px,#ff006f 397px,#ff0051 471px,#ff0041 528px)"></i><i style="background:linear-gradient(90deg,#009eff 37px,#006bff 148px,#9a44ff 223px,#ff2bfe 269px,#ff18d2 292px,#ff07aa 322px,#ff0094 345px,#ff0071 395px,#ff0052 468px,#ff0042 527px)"></i><i style="background:linear-gradient(90deg,#009cff 38px,#0269ff 149px,#9c42ff 225px,#ff29fe 270px,#ff17d2 293px,#ff06a9 324px,#ff0095 345px,#ff0072 395px,#ff0053 467px,#ff0043 526px)"></i><i style="background:linear-gradient(90deg,#009aff 38px,#0268ff 149px,#9b41ff 225px,#ff28fe 271px,#ff16d3 294px,#ff05aa 325px,#ff0096 345px,#ff0073 395px,#ff0054 467px,#f04 525px)"></i><i style="background:linear-gradient(90deg,#0098ff 39px,#0167ff 149px,#9c40ff 226px,#ff26fe 272px,#ff14d1 296px,#ff04a9 327px,#ff0097 346px,#ff0074 396px,#f05 468px,#ff0045 524px)"></i><i style="background:linear-gradient(90deg,#0097ff 39px,#0166ff 149px,#9a3fff 226px,#ff25fe 273px,#ff13d2 297px,#ff03aa 328px,#ff0094 351px,#ff0071 403px,#ff0052 478px,#ff0046 523px)"></i><i style="background:linear-gradient(90deg,#0095ff 40px,#0164ff 149px,#9b3dff 227px,#ff23fe 274px,#ff12d2 298px,#ff02a9 330px,#ff0084 373px,#ff0063 434px,#ff0047 522px)"></i><i style="background:linear-gradient(90deg,#0094ff 40px,#0063ff 149px,#993cff 227px,#ff22fe 275px,#ff11d2 299px,#ff01a9 331px,#ff0085 374px,#ff0064 435px,#ff0048 521px)"></i><i style="background:linear-gradient(90deg,#0092ff 41px,#0261ff 150px,#9c3aff 229px,#ff21fe 276px,#ff10d2 300px,#f0a 332px,#ff0085 375px,#ff0064 436px,#ff0048 520px)"></i><i style="background:linear-gradient(90deg,#0090ff 41px,#0260ff 150px,#9b39ff 229px,#ff1ffe 277px,#ff0fd3 301px,#f0a 333px,#ff0085 377px,#ff0064 439px,#ff0049 519px)"></i><i style="background:linear-gradient(90deg,#008eff 42px,#015fff 150px,#9b38ff 230px,#ff1efe 278px,#ff0dd1 303px,#ff00a9 335px,#ff0085 379px,#ff0064 441px,#ff004a 518px)"></i><i style="background:linear-gradient(90deg,#008dff 42px,#015eff 150px,#9c36ff 231px,#ff1dfe 279px,#ff0cd2 304px,#ff00ac 334px,#ff0087 378px,#ff0065 439px,#ff004b 517px)"></i><i style="background:linear-gradient(90deg,#008cff 42px,#015dff 150px,#9a35ff 231px,#ff1bfe 280px,#ff0bd2 305px,#ff00ae 333px,#ff0089 376px,#ff0068 436px,#ff004c 516px)"></i><i style="background:linear-gradient(90deg,#008aff 43px,#005cff 150px,#9b34ff 232px,#ff1afe 281px,#ff0ad2 306px,#ff00b1 332px,#ff008c 374px,#ff006a 433px,#ff004d 515px)"></i><i style="background:linear-gradient(90deg,#0089ff 43px,#025aff 151px,#9c33ff 233px,#ff19fe 282px,#ff09d2 307px,#ff00b3 331px,#ff008e 373px,#ff006c 431px,#ff004e 514px)"></i><i style="background:linear-gradient(90deg,#0087ff 44px,#0259ff 151px,#9c31ff 234px,#ff17fe 283px,#ff08d3 308px,#ff00b5 331px,#ff008f 373px,#ff006d 431px,#ff004f 513px)"></i><i style="background:linear-gradient(90deg,#0086ff 44px,#0158ff 151px,#9b30ff 234px,#ff16fe 284px,#ff07d1 310px,#ff00b8 330px,#ff0091 371px,#ff006f 428px,#ff0051 510px,#ff0050 512px)"></i><i style="background:linear-gradient(90deg,#0084ff 45px,#0157ff 151px,#9c2fff 235px,#ff15fe 285px,#ff06d2 311px,#ff00b9 330px,#ff0093 371px,#ff0070 428px,#ff0051 510px,#ff0051 511px)"></i><i style="background:linear-gradient(90deg,#0083ff 45px,#0156ff 151px,#9a2eff 235px,#ff14fe 286px,#ff05d2 312px,#f0b 330px,#ff0094 371px,#ff0071 427px,#ff0053 508px,#ff0052 510px)"></i><i style="background:linear-gradient(90deg,#0081ff 46px,#05f 151px,#9b2dff 236px,#ff13fe 287px,#ff04d2 313px,#f0b 331px,#ff0094 372px,#ff0071 429px,#ff0053 509px)"></i><i style="background:linear-gradient(90deg,#0080ff 46px,#0253ff 152px,#9b2bff 237px,#ff11fe 288px,#ff03d2 314px,#ff00b7 336px,#ff0091 378px,#ff006e 437px,#ff0054 508px)"></i><i style="background:linear-gradient(90deg,#007eff 47px,#0152ff 152px,#9c2aff 238px,#ff10fe 289px,#ff02d3 315px,#f0a 350px,#ff0085 397px,#ff0064 464px,#f05 507px)"></i><i style="background:linear-gradient(90deg,#007dff 47px,#0151ff 152px,#9b29ff 238px,#ff0ffe 290px,#ff01d3 316px,#f0a 351px,#ff0085 398px,#ff0064 465px,#ff0056 507px)"></i><i style="background:linear-gradient(90deg,#007cff 48px,#0150ff 152px,#9b28ff 239px,#ff0efe 291px,#ff00d2 318px,#ff00a9 353px,#ff0085 401px,#ff0063 469px,#ff0057 506px)"></i><i style="background:linear-gradient(90deg,#007aff 48px,#014fff 152px,#9a27ff 239px,#ff0dfe 292px,#ff00d2 319px,#ff00a9 355px,#ff0084 404px,#ff0063 473px,#ff0058 505px)"></i><i style="background:linear-gradient(90deg,#0079ff 49px,#004fff 152px,#9b26ff 240px,#ff0cfe 293px,#ff00d2 320px,#ff00a9 356px,#ff0084 405px,#ff0063 474px,#ff0059 504px)"></i><i style="background:linear-gradient(90deg,#0078ff 49px,#024dff 153px,#9b25ff 241px,#ff0bff 294px,#ff00d5 319px,#ff00ac 354px,#ff0087 402px,#f06 469px,#ff005a 503px)"></i><i style="background:linear-gradient(90deg,#0076ff 50px,#014cff 153px,#9c24ff 242px,#ff0aff 295px,#ff00d8 318px,#ff00af 353px,#ff0089 400px,#ff0068 466px,#ff005b 502px)"></i><i style="background:linear-gradient(90deg,#0075ff 50px,#014bff 153px,#9c23ff 243px,#ff08ff 296px,#ff00db 317px,#ff00b2 351px,#ff008c 397px,#ff006b 461px,#ff005c 501px)"></i><i style="background:linear-gradient(90deg,#0074ff 51px,#014aff 153px,#9b22ff 243px,#ff07ff 297px,#f0d 317px,#ff00b3 351px,#ff008d 397px,#ff006b 461px,#ff005d 500px)"></i><i style="background:linear-gradient(90deg,#0073ff 51px,#014aff 153px,#9c21ff 244px,#ff06ff 298px,#ff00e0 316px,#ff00b7 349px,#ff0090 394px,#ff006e 457px,#ff005e 499px)"></i><i style="background:linear-gradient(90deg,#0071ff 52px,#0248ff 154px,#9c20ff 245px,#ff05ff 299px,#ff00e2 316px,#ff00b8 349px,#ff0092 394px,#ff006f 456px,#ff005f 498px)"></i><i style="background:linear-gradient(90deg,#0070ff 52px,#0247ff 154px,#9d1eff 246px,#ff04ff 300px,#ff00e3 316px,#ff00b9 349px,#ff0093 394px,#ff0070 456px,#ff0060 497px)"></i><i style="background:linear-gradient(90deg,#006fff 53px,#0146ff 154px,#9b1eff 246px,#ff03ff 301px,#ff00e2 318px,#ff00b8 352px,#ff0092 397px,#ff006f 460px,#ff0061 496px)"></i><i style="background:linear-gradient(90deg,#006eff 53px,#0146ff 154px,#9c1dff 247px,#ff02ff 302px,#ff00d3 330px,#f0a 367px,#ff0085 418px,#ff0064 490px,#ff0062 495px)"></i><i style="background:linear-gradient(90deg,#006cff 54px,#0145ff 154px,#9b1cff 247px,#ff01ff 303px,#ff00d2 332px,#ff00a9 370px,#ff0084 422px,#ff0063 494px)"></i><i style="background:linear-gradient(90deg,#006bff 54px,#0144ff 154px,#9b1bff 248px,#f0f 304px,#ff00d2 333px,#ff00a9 371px,#ff0084 423px,#ff0064 493px)"></i><i style="background:linear-gradient(90deg,#006aff 55px,#0243ff 155px,#9c1aff 249px,#f0f 305px,#ff00d2 334px,#f0a 372px,#ff0085 424px,#f06 492px)"></i><i style="background:linear-gradient(90deg,#0069ff 55px,#0242ff 155px,#9c19ff 250px,#f0f 306px,#ff00d2 335px,#f0a 373px,#ff0085 425px,#ff0067 491px)"></i><i style="background:linear-gradient(90deg,#0068ff 56px,#0141ff 155px,#9b18ff 250px,#fe00ff 306px,#f0c 341px,#ff00a4 381px,#ff0080 436px,#ff0068 490px)"></i><i style="background:linear-gradient(90deg,#06f 57px,#0140ff 155px,#9c17ff 251px,#fa00ff 305px,#ff00fd 309px,#ff00d0 339px,#ff00a8 378px,#ff0083 432px,#ff0069 489px)"></i><i style="background:linear-gradient(90deg,#0065ff 57px,#0140ff 155px,#9b17ff 251px,#f600ff 304px,#ff00fd 310px,#ff00d0 340px,#ff00a8 380px,#ff0083 434px,#ff006a 488px)"></i><i style="background:linear-gradient(90deg,#0064ff 58px,#013fff 155px,#9b16ff 252px,#f300ff 303px,#ff00fd 311px,#ff00d1 341px,#ff00a8 381px,#ff0083 435px,#ff006b 487px)"></i><i style="background:linear-gradient(90deg,#0063ff 58px,#023eff 156px,#9c15ff 253px,#ef00ff 302px,#ff00fd 312px,#ff00d1 342px,#ff00a8 382px,#ff0084 436px,#ff006c 486px)"></i><i style="background:linear-gradient(90deg,#0062ff 59px,#023dff 156px,#9c13ff 254px,#ec00ff 301px,#ff00fd 313px,#ff00d1 343px,#ff00a9 383px,#ff0083 438px,#ff006e 485px)"></i><i style="background:linear-gradient(90deg,#0061ff 59px,#013cff 156px,#9b13ff 254px,#e900ff 300px,#ff00fd 314px,#ff00d0 345px,#ff00a7 386px,#ff0083 441px,#ff006f 484px)"></i><i style="background:linear-gradient(90deg,#0060ff 60px,#013bff 156px,#9b12ff 255px,#e700ff 300px,#ff00fd 315px,#ff00d0 346px,#ff00a8 387px,#ff0083 443px,#ff0070 483px)"></i><i style="background:linear-gradient(90deg,#005fff 60px,#013bff 156px,#9c11ff 256px,#e400ff 299px,#ff00fd 316px,#ff00d0 347px,#ff00a8 388px,#ff0083 444px,#ff0071 482px)"></i><i style="background:linear-gradient(90deg,#005eff 61px,#013aff 156px,#9b10ff 256px,#e000ff 298px,#ff00fd 317px,#ff00d1 348px,#ff00a8 389px,#ff0083 445px,#ff0072 481px)"></i><i style="background:linear-gradient(90deg,#005dff 61px,#0239ff 157px,#9d0fff 258px,#d0f 297px,#ff00fd 318px,#ff00d1 349px,#ff00a8 390px,#ff0084 446px,#ff0074 480px)"></i><i style="background:linear-gradient(90deg,#005bff 62px,#0238ff 157px,#9c0fff 258px,#da00ff 296px,#ff00fd 319px,#ff00d1 350px,#ff00a9 391px,#ff0084 447px,#ff0075 479px)"></i><i style="background:linear-gradient(90deg,#005aff 63px,#0137ff 157px,#9c0eff 259px,#d700ff 295px,#ff00fd 320px,#ff00d1 351px,#ff00a8 393px,#ff0083 450px,#ff0076 478px)"></i><i style="background:linear-gradient(90deg,#0059ff 63px,#0137ff 157px,#9b0dff 259px,#d400ff 294px,#ff00fd 321px,#ff00d0 353px,#ff00a8 395px,#ff0083 452px,#f07 477px)"></i><i style="background:linear-gradient(90deg,#0058ff 64px,#0136ff 157px,#9c0cff 260px,#d100ff 293px,#ff00fd 322px,#ff00d1 354px,#ff00a8 396px,#ff0084 453px,#ff0078 476px)"></i><i style="background:linear-gradient(90deg,#0057ff 64px,#0135ff 157px,#9b0cff 260px,#ce00ff 292px,#ff00fd 323px,#ff00d1 355px,#ff00a8 397px,#ff0083 455px,#ff007a 475px)"></i><i style="background:linear-gradient(90deg,#0056ff 65px,#0234ff 158px,#9d0aff 262px,#cb00ff 291px,#ff00fd 324px,#ff00d1 356px,#ff00a8 399px,#ff0083 457px,#ff007b 474px)"></i><i style="background:linear-gradient(90deg,#05f 65px,#0234ff 158px,#9c0aff 262px,#c900ff 291px,#ff00fd 325px,#ff00d1 357px,#ff00a8 400px,#ff0084 458px,#ff007c 473px)"></i><i style="background:linear-gradient(90deg,#0054ff 66px,#0133ff 158px,#9c09ff 263px,#c600ff 290px,#ff00fd 326px,#ff00d1 358px,#ff00a9 401px,#ff0084 459px,#ff007d 473px)"></i><i style="background:linear-gradient(90deg,#0054ff 66px,#0132ff 158px,#9b09ff 263px,#c400ff 289px,#ff00fd 327px,#ff00d0 360px,#ff00a8 403px,#ff0083 462px,#ff007e 472px)"></i><i style="background:linear-gradient(90deg,#0052ff 67px,#0132ff 158px,#9b08ff 264px,#c100ff 288px,#ff00fd 328px,#ff00d1 361px,#ff00a8 404px,#ff0084 463px,#ff0080 471px)"></i><i style="background:linear-gradient(90deg,#0051ff 68px,#0131ff 158px,#9a07ff 264px,#bf00ff 288px,#ff00fd 329px,#ff00d1 362px,#ff00a8 406px,#ff0083 466px,#ff0081 470px)"></i><i style="background:linear-gradient(90deg,#0051ff 68px,#0230ff 159px,#9c06ff 266px,#bd00ff 287px,#ff00fd 330px,#ff00d1 363px,#ff00a8 407px,#ff0083 467px,#ff0082 469px)"></i><i style="background:linear-gradient(90deg,#004fff 69px,#022fff 159px,#9b06ff 266px,#b0f 287px,#ff00fd 331px,#ff00d1 364px,#ff00a8 408px,#ff0084 468px)"></i><i style="background:linear-gradient(90deg,#004fff 69px,#012fff 159px,#9c05ff 267px,#ba00ff 287px,#ff00fd 332px,#ff00d1 365px,#ff00a9 409px,#ff0085 467px)"></i><i style="background:linear-gradient(90deg,#004eff 70px,#012eff 159px,#9c04ff 268px,#ba00ff 288px,#ff00fd 333px,#ff00d0 367px,#ff00a8 412px,#ff0086 466px)"></i><i style="background:linear-gradient(90deg,#004dff 70px,#012dff 159px,#9b03ff 268px,#b0f 289px,#ff00fd 334px,#ff00d1 368px,#ff00a8 413px,#f08 465px)"></i><i style="background:linear-gradient(90deg,#004cff 71px,#012dff 159px,#9c03ff 269px,#c900ff 299px,#ff00fd 335px,#ff00d1 369px,#ff00a8 414px,#ff0089 464px)"></i><i style="background:linear-gradient(90deg,#004bff 72px,#022cff 160px,#9c02ff 270px,#ff00fd 336px,#ff00d1 370px,#ff00a8 415px,#ff008a 463px)"></i><i style="background:linear-gradient(90deg,#004aff 72px,#022bff 160px,#9d01ff 271px,#ff00fd 337px,#ff00d1 371px,#ff00a9 416px,#ff008c 462px)"></i><i style="background:linear-gradient(90deg,#0049ff 73px,#012bff 160px,#9c01ff 271px,#ff00fd 338px,#ff00d1 372px,#ff00a9 417px,#ff008d 461px)"></i><i style="background:linear-gradient(90deg,#0048ff 73px,#012aff 160px,#9c00ff 272px,#ff00fd 339px,#ff00d0 374px,#ff00a8 420px,#ff008f 460px)"></i><i style="background:linear-gradient(90deg,#0047ff 74px,#012aff 160px,#9b00ff 272px,#ff00fd 340px,#ff00d1 375px,#ff00a8 421px,#ff0090 459px)"></i><i style="background:linear-gradient(90deg,#0047ff 74px,#0129ff 160px,#9b00ff 273px,#ff00fd 341px,#ff00d1 376px,#ff00a8 422px,#ff0091 458px)"></i><i style="background:linear-gradient(90deg,#0046ff 75px,#0228ff 161px,#9c00ff 274px,#ff00fd 342px,#ff00d1 377px,#ff00a9 423px,#ff0093 457px)"></i><i style="background:linear-gradient(90deg,#0045ff 76px,#0228ff 161px,#90f 273px,#ff00fd 343px,#ff00d1 378px,#ff00a8 425px,#ff0094 456px)"></i><i style="background:linear-gradient(90deg,#04f 76px,#0127ff 161px,#9700ff 272px,#ff00fd 344px,#ff00d1 379px,#ff00a9 426px,#ff0096 455px)"></i><i style="background:linear-gradient(90deg,#0043ff 77px,#0127ff 161px,#9500ff 271px,#ff00fd 345px,#ff00d1 381px,#ff00a8 428px,#ff0097 454px)"></i><i style="background:linear-gradient(90deg,#0042ff 77px,#0126ff 161px,#9200ff 270px,#ff00fd 346px,#ff00d1 382px,#ff00a8 429px,#f09 453px)"></i><i style="background:linear-gradient(90deg,#0041ff 78px,#0125ff 161px,#9000ff 269px,#ff00fd 347px,#ff00d1 383px,#ff00a8 431px,#ff009a 452px)"></i><i style="background:linear-gradient(90deg,#0040ff 79px,#0225ff 162px,#8e00ff 268px,#ff00fd 348px,#ff00d1 384px,#ff00a8 432px,#ff009c 451px)"></i><i style="background:linear-gradient(90deg,#0040ff 79px,#0224ff 162px,#8b00ff 267px,#ff00fe 349px,#ff00d1 385px,#ff00a8 433px,#ff009d 450px)"></i><i style="background:linear-gradient(90deg,#003fff 80px,#0124ff 162px,#8900ff 266px,#ff00fe 350px,#ff00d1 386px,#ff00a9 434px,#ff009f 449px)"></i><i style="background:linear-gradient(90deg,#003eff 80px,#0123ff 162px,#8700ff 265px,#ff00fe 351px,#ff00d1 388px,#ff00a8 436px,#ff00a0 448px)"></i><i style="background:linear-gradient(90deg,#003dff 81px,#0123ff 162px,#8500ff 264px,#ff00fe 352px,#ff00d1 389px,#ff00a8 438px,#ff00a2 447px)"></i><i style="background:linear-gradient(90deg,#003dff 81px,#0122ff 162px,#8300ff 263px,#ff00fe 353px,#ff00d1 390px,#ff00a8 439px,#ff00a3 446px)"></i><i style="background:linear-gradient(90deg,#003cff 82px,#0221ff 163px,#8100ff 262px,#ff00fe 354px,#ff00d1 391px,#ff00a8 440px,#ff00a5 445px)"></i><i style="background:linear-gradient(90deg,#003bff 83px,#0221ff 163px,#7e00ff 261px,#ff00fe 355px,#ff00d1 392px,#ff00a9 441px,#ff00a7 444px)"></i><i style="background:linear-gradient(90deg,#003aff 83px,#0120ff 163px,#7c00ff 260px,#ff00fe 356px,#ff00d1 393px,#ff00a9 442px,#ff00a8 443px)"></i><i style="background:linear-gradient(90deg,#0039ff 84px,#0120ff 163px,#7b00ff 260px,#ff00fe 357px,#ff00d2 394px,#f0a 442px)"></i><i style="background:linear-gradient(90deg,#0039ff 84px,#011fff 163px,#7900ff 259px,#ff00fe 358px,#ff00d1 396px,#ff00ac 441px)"></i><i style="background:linear-gradient(90deg,#0038ff 85px,#021eff 164px,#70f 258px,#ff00fe 359px,#ff00d1 397px,#ff00ad 440px)"></i><i style="background:linear-gradient(90deg,#0037ff 86px,#021eff 164px,#7500ff 257px,#ff00fe 360px,#ff00d1 398px,#ff00ae 440px)"></i><i style="background:linear-gradient(90deg,#0037ff 86px,#021dff 164px,#7300ff 256px,#ff00fe 361px,#ff00d1 399px,#ff00b0 439px)"></i><i style="background:linear-gradient(90deg,#0036ff 87px,#011dff 164px,#7100ff 255px,#ff00fe 362px,#ff00d1 400px,#ff00b1 438px)"></i><i style="background:linear-gradient(90deg,#0035ff 87px,#011dff 164px,#6f00ff 254px,#ff00fe 363px,#ff00d2 401px,#ff00b3 437px)"></i><i style="background:linear-gradient(90deg,#0034ff 88px,#011cff 164px,#6d00ff 253px,#ff00fe 364px,#ff00d1 403px,#ff00b5 436px)"></i><i style="background:linear-gradient(90deg,#03f 89px,#021bff 165px,#6b00ff 252px,#ff00fe 365px,#ff00d1 404px,#ff00b7 435px)"></i><i style="background:linear-gradient(90deg,#03f 89px,#021bff 165px,#6a00ff 251px,#ff00fe 366px,#ff00d1 405px,#ff00b8 434px)"></i><i style="background:linear-gradient(90deg,#0032ff 90px,#021aff 165px,#6800ff 250px,#ff00fe 367px,#ff00d1 406px,#ff00ba 433px)"></i><i style="background:linear-gradient(90deg,#0032ff 90px,#011aff 165px,#60f 249px,#ff00fe 368px,#ff00d1 407px,#ff00bc 432px)"></i><i style="background:linear-gradient(90deg,#0031ff 91px,#011aff 165px,#6400ff 248px,#ff00fe 369px,#ff00d2 408px,#ff00be 431px)"></i><i style="background:linear-gradient(90deg,#0030ff 92px,#0119ff 165px,#6200ff 247px,#ff00fe 370px,#ff00d1 410px,#ff00bf 430px)"></i><i style="background:linear-gradient(90deg,#002fff 92px,#0218ff 166px,#6000ff 246px,#fe00ff 369px,#f0c 416px,#ff00c1 429px)"></i><i style="background:linear-gradient(90deg,#002fff 93px,#0218ff 166px,#5e00ff 245px,#fb00ff 368px,#ff00fb 374px,#ff00ce 415px,#ff00c3 428px)"></i><i style="background:linear-gradient(90deg,#002eff 94px,#0218ff 166px,#5d00ff 244px,#fa00ff 368px,#ff00fc 374px,#ff00d0 414px,#ff00c5 427px)"></i><i style="background:linear-gradient(90deg,#002dff 94px,#0117ff 166px,#5b00ff 243px,#f800ff 368px,#ff00fc 375px,#ff00d0 416px,#ff00c7 426px)"></i><i style="background:linear-gradient(90deg,#002cff 95px,#0117ff 166px,#5a00ff 243px,#f700ff 368px,#ff00fd 376px,#ff00d0 417px,#ff00c9 425px)"></i><i style="background:linear-gradient(90deg,#002cff 95px,#0116ff 166px,#5900ff 242px,#f600ff 368px,#ff00fd 377px,#ff00d0 418px,#ff00cb 424px)"></i><i style="background:linear-gradient(90deg,#002bff 96px,#0216ff 167px,#5700ff 241px,#f300ff 367px,#ff00fe 377px,#ff00d1 418px,#ff00cd 423px)"></i><i style="background:linear-gradient(90deg,#002aff 97px,#0215ff 167px,#50f 240px,#f200ff 367px,#ff00fe 378px,#ff00d1 419px,#ff00cf 422px)"></i><i style="background:linear-gradient(90deg,#002aff 97px,#0215ff 167px,#5300ff 239px,#f100ff 367px,#ff00fe 379px,#ff00d1 420px,#ff00d0 421px)"></i><i style="background:linear-gradient(90deg,#0029ff 98px,#0114ff 167px,#5200ff 238px,#e0f 366px,#ff00fe 380px,#ff00d2 420px)"></i><i style="background:linear-gradient(90deg,#0028ff 99px,#0114ff 167px,#5000ff 237px,#ed00ff 366px,#ff00fe 381px,#ff00d4 419px)"></i><i style="background:linear-gradient(90deg,#0028ff 99px,#0114ff 167px,#4e00ff 236px,#ea00ff 365px,#ff00fe 382px,#ff00d6 418px)"></i><i style="background:linear-gradient(90deg,#0027ff 100px,#0213ff 168px,#4d00ff 235px,#e900ff 365px,#ff00fe 383px,#ff00d8 417px)"></i><i style="background:linear-gradient(90deg,#0027ff 100px,#0213ff 168px,#4b00ff 234px,#e800ff 365px,#ff00fe 384px,#ff00db 416px)"></i><i style="background:linear-gradient(90deg,#0026ff 101px,#0212ff 168px,#4900ff 233px,#e600ff 364px,#ff00fe 385px,#f0d 415px)"></i><i style="background:linear-gradient(90deg,#0025ff 102px,#0112ff 168px,#4800ff 232px,#e400ff 364px,#ff00fe 386px,#ff00df 414px)"></i><i style="background:linear-gradient(90deg,#0025ff 102px,#0111ff 168px,#4600ff 231px,#e200ff 363px,#ff00fe 387px,#ff00e1 413px)"></i><i style="background:linear-gradient(90deg,#0024ff 103px,#0111ff 168px,#4500ff 230px,#e100ff 363px,#ff00fe 388px,#ff00e3 412px)"></i><i style="background:linear-gradient(90deg,#0023ff 104px,#0210ff 169px,#40f 230px,#e100ff 364px,#ff00fe 389px,#ff00e5 411px)"></i><i style="background:linear-gradient(90deg,#0023ff 104px,#0210ff 169px,#4300ff 229px,#df00ff 363px,#ff00fe 390px,#ff00e7 410px)"></i><i style="background:linear-gradient(90deg,#02f 105px,#0210ff 169px,#4100ff 228px,#de00ff 363px,#ff00fe 391px,#ff00e9 409px)"></i><i style="background:linear-gradient(90deg,#02f 105px,#010fff 169px,#4000ff 227px,#db00ff 362px,#ff00fe 392px,#ff00ec 408px)"></i><i style="background:linear-gradient(90deg,#0021ff 106px,#010fff 169px,#3e00ff 226px,#da00ff 362px,#ff00fe 393px,#f0e 407px)"></i><i style="background:linear-gradient(90deg,#0021ff 107px,#010fff 169px,#3d00ff 225px,#d900ff 362px,#ff00fe 394px,#ff00f0 406px)"></i><i style="background:linear-gradient(90deg,#0020ff 107px,#020eff 170px,#3b00ff 224px,#d700ff 361px,#ff00fe 395px,#ff00f1 406px)"></i><i style="background:linear-gradient(90deg,#001fff 108px,#020eff 170px,#3a00ff 223px,#d600ff 361px,#ff00fe 396px,#ff00f4 405px)"></i><i style="background:linear-gradient(90deg,#001fff 109px,#020dff 170px,#3800ff 222px,#d400ff 360px,#ff00fe 397px,#ff00f6 404px)"></i><i style="background:linear-gradient(90deg,#001eff 109px,#010dff 170px,#3700ff 221px,#d300ff 360px,#ff00fe 398px,#ff00f8 403px)"></i><i style="background:linear-gradient(90deg,#001eff 110px,#010dff 170px,#3500ff 220px,#d100ff 360px,#ff00fe 399px,#ff00fa 402px)"></i><i style="background:linear-gradient(90deg,#001dff 111px,#010cff 170px,#3500ff 220px,#d000ff 360px,#ff00fe 400px,#ff00fd 401px)"></i><i style="background:linear-gradient(90deg,#001dff 111px,#020cff 171px,#3400ff 219px,#cf00ff 360px,#f0f 400px)"></i><i style="background:linear-gradient(90deg,#001cff 112px,#020bff 171px,#3200ff 218px,#cd00ff 359px,#fc00ff 399px)"></i><i style="background:linear-gradient(90deg,#001bff 113px,#020bff 171px,#3100ff 217px,#c0f 359px,#fa00ff 398px)"></i><i style="background:linear-gradient(90deg,#001bff 113px,#010bff 171px,#2f00ff 216px,#cb00ff 359px,#f800ff 397px)"></i><i style="background:linear-gradient(90deg,#001aff 114px,#010aff 171px,#2e00ff 215px,#c900ff 358px,#f500ff 396px)"></i><i style="background:linear-gradient(90deg,#001aff 115px,#020aff 172px,#2d00ff 214px,#c800ff 358px,#f300ff 395px)"></i><i style="background:linear-gradient(90deg,#0019ff 115px,#0209ff 172px,#2b00ff 213px,#c700ff 358px,#f100ff 394px)"></i><i style="background:linear-gradient(90deg,#0019ff 116px,#0209ff 172px,#2a00ff 212px,#c500ff 357px,#e0f 393px)"></i><i style="background:linear-gradient(90deg,#0018ff 117px,#0209ff 172px,#2a00ff 212px,#c500ff 358px,#ec00ff 392px)"></i><i style="background:linear-gradient(90deg,#0018ff 117px,#0108ff 172px,#2800ff 211px,#c300ff 357px,#ea00ff 391px)"></i><i style="background:linear-gradient(90deg,#0017ff 118px,#0108ff 172px,#2700ff 210px,#c300ff 357px,#e800ff 390px)"></i><i style="background:linear-gradient(90deg,#0016ff 119px,#0208ff 173px,#2600ff 209px,#c200ff 357px,#e600ff 389px)"></i><i style="background:linear-gradient(90deg,#0016ff 120px,#0207ff 173px,#2400ff 208px,#c000ff 356px,#e300ff 388px)"></i><i style="background:linear-gradient(90deg,#0015ff 120px,#0207ff 173px,#2400ff 208px,#c000ff 357px,#e100ff 387px)"></i><i style="background:linear-gradient(90deg,#0015ff 121px,#0207ff 173px,#2300ff 207px,#be00ff 356px,#df00ff 386px)"></i><i style="background:linear-gradient(90deg,#0014ff 122px,#0106ff 173px,#20f 206px,#bd00ff 356px,#d0f 385px)"></i><i style="background:linear-gradient(90deg,#0014ff 122px,#0106ff 173px,#2000ff 205px,#bc00ff 356px,#db00ff 384px)"></i><i style="background:linear-gradient(90deg,#0013ff 123px,#0206ff 174px,#2000ff 205px,#b0f 356px,#d900ff 383px)"></i><i style="background:linear-gradient(90deg,#0013ff 124px,#0205ff 174px,#1f00ff 204px,#ba00ff 356px,#d700ff 382px)"></i><i style="background:linear-gradient(90deg,#0012ff 125px,#0205ff 174px,#1f00ff 204px,#ba00ff 356px,#d500ff 381px)"></i><i style="background:linear-gradient(90deg,#0012ff 125px,#0205ff 174px,#1e00ff 204px,#ba00ff 357px,#d300ff 380px)"></i><i style="background:linear-gradient(90deg,#01f 126px,#0104ff 174px,#1d00ff 203px,#b800ff 356px,#d100ff 379px)"></i><i style="background:linear-gradient(90deg,#01f 127px,#0104ff 174px,#1d00ff 203px,#b800ff 357px,#cf00ff 378px)"></i><i style="background:linear-gradient(90deg,#0010ff 127px,#0204ff 175px,#1e00ff 205px,#b900ff 359px,#cd00ff 377px)"></i><i style="background:linear-gradient(90deg,#0010ff 128px,#0203ff 175px,#2000ff 207px,#bc00ff 362px,#cb00ff 376px)"></i><i style="background:linear-gradient(90deg,#000fff 129px,#0203ff 175px,#20f 209px,#bd00ff 364px,#c900ff 375px)"></i><i style="background:linear-gradient(90deg,#000fff 129px,#0203ff 175px,#2700ff 215px,#c200ff 370px,#c700ff 374px)"></i><i style="background:linear-gradient(90deg,#000eff 130px,#0102ff 175px,#3100ff 226px,#c500ff 373px)"></i><i style="background:linear-gradient(90deg,#000eff 131px,#0102ff 175px,#5900ff 267px,#c300ff 372px)"></i><i style="background:linear-gradient(90deg,#000dff 132px,#0202ff 176px,#9d00ff 336px,#c200ff 372px)"></i><i style="background:linear-gradient(90deg,#000dff 132px,#0201ff 176px,#9c00ff 336px,#c000ff 371px)"></i><i style="background:linear-gradient(90deg,#000cff 133px,#0201ff 176px,#9c00ff 337px,#be00ff 370px)"></i><i style="background:linear-gradient(90deg,#000cff 134px,#0201ff 176px,#9c00ff 337px,#bc00ff 369px)"></i><i style="background:linear-gradient(90deg,#000bff 135px,#0101ff 176px,#9c00ff 338px,#b0f 368px)"></i><i style="background:linear-gradient(90deg,#000bff 135px,#0100ff 176px,#9b00ff 338px,#b900ff 367px)"></i><i style="background:linear-gradient(90deg,#000aff 136px,#0200ff 177px,#9d00ff 340px,#b700ff 366px)"></i><i style="background:linear-gradient(90deg,#000aff 137px,#0200ff 177px,#9c00ff 340px,#b500ff 365px)"></i><i style="background:linear-gradient(90deg,#0009ff 138px,#0200ff 177px,#9c00ff 341px,#b300ff 364px)"></i><i style="background:linear-gradient(90deg,#0009ff 138px,#0200ff 177px,#9d00ff 342px,#b200ff 363px)"></i><i style="background:linear-gradient(90deg,#0009ff 139px,#0100ff 177px,#9c00ff 342px,#b000ff 362px)"></i><i style="background:linear-gradient(90deg,#0008ff 140px,#0200ff 178px,#9d00ff 344px,#ae00ff 361px)"></i><i style="background:linear-gradient(90deg,#0007ff 141px,#0200ff 178px,#9d00ff 344px,#ac00ff 360px)"></i><i style="background:linear-gradient(90deg,#0007ff 141px,#0200ff 178px,#9d00ff 345px,#ab00ff 359px)"></i><i style="background:linear-gradient(90deg,#0007ff 142px,#0200ff 178px,#9c00ff 345px,#a900ff 358px)"></i><i style="background:linear-gradient(90deg,#0006ff 143px,#0200ff 178px,#9c00ff 346px,#a700ff 357px)"></i><i style="background:linear-gradient(90deg,#0006ff 144px,#0100ff 178px,#9c00ff 346px,#a500ff 356px)"></i><i style="background:linear-gradient(90deg,#0005ff 145px,#0200ff 179px,#9d00ff 348px,#a400ff 355px)"></i><i style="background:linear-gradient(90deg,#0005ff 145px,#0100ff 178px,#9b00ff 347px,#a200ff 354px)"></i><i style="background:linear-gradient(90deg,#0004ff 146px,#0200ff 179px,#9d00ff 349px,#a000ff 353px)"></i><i style="background:linear-gradient(90deg,#0004ff 147px,#0200ff 179px,#9c00ff 349px,#9f00ff 352px)"></i><i style="background:linear-gradient(90deg,#0003ff 148px,#0200ff 179px,#9c00ff 350px,#9d00ff 351px)"></i><i style="background:linear-gradient(90deg,#0003ff 149px,#0100ff 179px,#9c00ff 350px)"></i><i style="background:linear-gradient(90deg,#0003ff 149px,#0200ff 180px,#9a00ff 349px)"></i><i style="background:linear-gradient(90deg,#0002ff 150px,#0200ff 180px,#9800ff 348px)"></i><i style="background:linear-gradient(90deg,#0002ff 151px,#0200ff 180px,#9700ff 347px)"></i><i style="background:linear-gradient(90deg,#0001ff 152px,#0200ff 180px,#9500ff 346px)"></i><i style="background:linear-gradient(90deg,#0001ff 153px,#0200ff 180px,#9400ff 345px)"></i><i style="background:linear-gradient(90deg,#00f 153px,#0100ff 180px,#9200ff 344px)"></i><i style="background:linear-gradient(90deg,#00f 154px,#0200ff 181px,#9100ff 343px)"></i><i style="background:linear-gradient(90deg,#00f 155px,#0200ff 181px,#8f00ff 342px)"></i><i style="background:linear-gradient(90deg,#00f 156px,#0200ff 181px,#8e00ff 341px)"></i><i style="background:linear-gradient(90deg,#00f 157px,#0200ff 181px,#8c00ff 340px)"></i><i style="background:linear-gradient(90deg,#00f 158px,#0200ff 181px,#8b00ff 339px)"></i><i style="background:linear-gradient(90deg,#00f 158px,#0200ff 182px,#8900ff 338px)"></i><i style="background:linear-gradient(90deg,#00f 159px,#0200ff 182px,#8900ff 338px)"></i><i style="background:linear-gradient(90deg,#00f 160px,#0200ff 182px,#8700ff 337px)"></i><i style="background:linear-gradient(90deg,#00f 161px,#0200ff 182px,#8600ff 336px)"></i><i style="background:linear-gradient(90deg,#00f 162px,#0200ff 182px,#8400ff 335px)"></i><i style="background:linear-gradient(90deg,#00f 163px,#0200ff 182px,#8300ff 334px)"></i><i style="background:linear-gradient(90deg,#00f 164px,#0200ff 183px,#8100ff 333px)"></i><i style="background:linear-gradient(90deg,#00f 164px,#0200ff 183px,#8000ff 332px)"></i><i style="background:linear-gradient(90deg,#00f 165px,#0200ff 183px,#7f00ff 331px)"></i><i style="background:linear-gradient(90deg,#00f 166px,#0200ff 183px,#7d00ff 330px)"></i><i style="background:linear-gradient(90deg,#00f 167px,#0200ff 184px,#7c00ff 329px)"></i><i style="background:linear-gradient(90deg,#00f 168px,#0200ff 184px,#7a00ff 328px)"></i><i style="background:linear-gradient(90deg,#00f 169px,#0200ff 184px,#7900ff 327px)"></i><i style="background:linear-gradient(90deg,#00f 170px,#0200ff 184px,#7800ff 326px)"></i><i style="background:linear-gradient(90deg,#00f 171px,#0300ff 185px,#7600ff 325px)"></i><i style="background:linear-gradient(90deg,#00f 172px,#0300ff 185px,#7500ff 324px)"></i><i style="background:linear-gradient(90deg,#00f 173px,#0200ff 185px,#7400ff 323px)"></i><i style="background:linear-gradient(90deg,#00f 174px,#0200ff 185px,#7200ff 322px)"></i><i style="background:linear-gradient(90deg,#00f 175px,#0300ff 186px,#7100ff 321px)"></i><i style="background:linear-gradient(90deg,#00f 176px,#0400ff 187px,#7000ff 320px)"></i><i style="background:linear-gradient(90deg,#00f 177px,#0400ff 188px,#6e00ff 319px)"></i><i style="background:linear-gradient(90deg,#00f 178px,#0500ff 189px,#6d00ff 318px)"></i><i style="background:linear-gradient(90deg,#00f 179px,#0600ff 191px,#6c00ff 317px)"></i><i style="background:linear-gradient(90deg,#00f 180px,#0e00ff 201px,#6a00ff 316px)"></i><i style="background:linear-gradient(90deg,#00f 181px,#6900ff 315px)"></i><i style="background:linear-gradient(90deg,#00f 182px,#6800ff 314px)"></i><i style="background:linear-gradient(90deg,#00f 183px,#6700ff 313px)"></i><i style="background:linear-gradient(90deg,#00f 184px,#6500ff 312px)"></i><i style="background:linear-gradient(90deg,#0100ff 185px,#6400ff 311px)"></i><i style="background:linear-gradient(90deg,#0200ff 186px,#6300ff 310px)"></i><i style="background:linear-gradient(90deg,#0200ff 187px,#6200ff 309px)"></i><i style="background:linear-gradient(90deg,#0300ff 188px,#6100ff 308px)"></i><i style="background:linear-gradient(90deg,#0300ff 189px,#5f00ff 307px)"></i><i style="background:linear-gradient(90deg,#0400ff 190px,#5e00ff 306px)"></i><i style="background:linear-gradient(90deg,#0500ff 191px,#5d00ff 305px)"></i><i style="background:linear-gradient(90deg,#0500ff 192px,#5d00ff 305px)"></i><i style="background:linear-gradient(90deg,#0700ff 194px,#5b00ff 304px)"></i><i style="background:linear-gradient(90deg,#0700ff 195px,#5a00ff 303px)"></i><i style="background:linear-gradient(90deg,#0800ff 196px,#5900ff 302px)"></i><i style="background:linear-gradient(90deg,#0800ff 197px,#5800ff 301px)"></i><i style="background:linear-gradient(90deg,#0900ff 198px,#5700ff 300px)"></i><i style="background:linear-gradient(90deg,#0a00ff 199px,#5600ff 299px)"></i><i style="background:linear-gradient(90deg,#0a00ff 200px,#50f 298px)"></i><i style="background:linear-gradient(90deg,#0c00ff 202px,#5300ff 297px)"></i><i style="background:linear-gradient(90deg,#0c00ff 203px,#5200ff 296px)"></i><i style="background:linear-gradient(90deg,#0d00ff 204px,#5100ff 295px)"></i><i style="background:linear-gradient(90deg,#0d00ff 205px,#5000ff 294px)"></i><i style="background:linear-gradient(90deg,#0e00ff 206px,#4f00ff 293px)"></i><i style="background:linear-gradient(90deg,#0f00ff 208px,#4e00ff 292px)"></i><i style="background:linear-gradient(90deg,#1000ff 209px,#4d00ff 291px)"></i><i style="background:linear-gradient(90deg,#1000ff 210px,#4c00ff 290px)"></i><i style="background:linear-gradient(90deg,#10f 211px,#4b00ff 289px)"></i><i style="background:linear-gradient(90deg,#10f 212px,#4a00ff 288px)"></i><i style="background:linear-gradient(90deg,#1300ff 214px,#4800ff 287px)"></i><i style="background:linear-gradient(90deg,#1300ff 215px,#4700ff 286px)"></i><i style="background:linear-gradient(90deg,#1400ff 216px,#4600ff 285px)"></i><i style="background:linear-gradient(90deg,#1400ff 217px,#4500ff 284px)"></i><i style="background:linear-gradient(90deg,#1500ff 218px,#40f 283px)"></i><i style="background:linear-gradient(90deg,#1600ff 220px,#4300ff 282px)"></i><i style="background:linear-gradient(90deg,#1700ff 221px,#4200ff 281px)"></i><i style="background:linear-gradient(90deg,#1700ff 222px,#4100ff 280px)"></i><i style="background:linear-gradient(90deg,#1800ff 223px,#4000ff 279px)"></i><i style="background:linear-gradient(90deg,#1800ff 224px,#3f00ff 278px)"></i><i style="background:linear-gradient(90deg,#1a00ff 226px,#3e00ff 277px)"></i><i style="background:linear-gradient(90deg,#1a00ff 227px,#3d00ff 276px)"></i><i style="background:linear-gradient(90deg,#1b00ff 228px,#3c00ff 275px)"></i><i style="background:linear-gradient(90deg,#1b00ff 229px,#3b00ff 274px)"></i><i style="background:linear-gradient(90deg,#1c00ff 230px,#3a00ff 273px)"></i><i style="background:linear-gradient(90deg,#1c00ff 231px,#3900ff 272px)"></i><i style="background:linear-gradient(90deg,#1d00ff 233px,#3800ff 271px)"></i><i style="background:linear-gradient(90deg,#1e00ff 234px,#3800ff 271px)"></i><i style="background:linear-gradient(90deg,#1e00ff 235px,#3700ff 270px)"></i><i style="background:linear-gradient(90deg,#1f00ff 236px,#3600ff 269px)"></i><i style="background:linear-gradient(90deg,#1f00ff 237px,#3500ff 268px)"></i><i style="background:linear-gradient(90deg,#2100ff 239px,#3400ff 267px)"></i><i style="background:linear-gradient(90deg,#2100ff 240px,#30f 266px)"></i><i style="background:linear-gradient(90deg,#20f 241px,#3200ff 265px)"></i><i style="background:linear-gradient(90deg,#20f 242px,#3100ff 264px)"></i><i style="background:linear-gradient(90deg,#2300ff 244px,#3000ff 263px)"></i><i style="background:linear-gradient(90deg,#2400ff 245px,#3000ff 262px)"></i><i style="background:linear-gradient(90deg,#2400ff 246px,#2f00ff 261px)"></i><i style="background:linear-gradient(90deg,#2500ff 248px,#2e00ff 260px)"></i><i style="background:linear-gradient(90deg,#2700ff 250px,#2d00ff 259px)"></i></div>
<div class="ciefill" style="left:1348px;top:376px;width:197px;height:133px"><i style="background:linear-gradient(90deg,#b0ff00 0px,#fffd00 159px,#ffea00 197px)"></i><i style="background:linear-gradient(90deg,#b0ff00 0px,#fffd00 158px,#ffe900 197px)"></i><i style="background:linear-gradient(90deg,#b1ff00 0px,#fffd00 157px,#ffe900 197px)"></i><i style="background:linear-gradient(90deg,#b1ff00 0px,#fffd00 156px,#ffe900 197px)"></i><i style="background:linear-gradient(90deg,#b1ff00 0px,#fffd00 155px,#ffe800 197px)"></i><i style="background:linear-gradient(90deg,#b2ff00 0px,#fffd00 154px,#ffe800 197px)"></i><i style="background:linear-gradient(90deg,#b2ff00 0px,#fffd00 153px,#ffe700 197px)"></i><i style="background:linear-gradient(90deg,#b2ff00 0px,#fffd00 153px,#ffe700 197px)"></i><i style="background:linear-gradient(90deg,#b3ff00 0px,#fffd00 152px,#ffe600 197px)"></i><i style="background:linear-gradient(90deg,#b3ff00 0px,#fffd00 151px,#ffe600 197px)"></i><i style="background:linear-gradient(90deg,#b4ff00 0px,#fffd00 150px,#ffe600 197px)"></i><i style="background:linear-gradient(90deg,#b4ff00 0px,#fffd00 149px,#ffe500 197px)"></i><i style="background:linear-gradient(90deg,#b4ff00 0px,#fffd00 148px,#ffe500 197px)"></i><i style="background:linear-gradient(90deg,#b5ff00 0px,#fffd00 147px,#ffe400 197px)"></i><i style="background:linear-gradient(90deg,#b5ff00 0px,#fffd00 146px,#ffe400 197px)"></i><i style="background:linear-gradient(90deg,#b5ff00 0px,#fffd00 145px,#ffe300 197px)"></i><i style="background:linear-gradient(90deg,#b6ff01 0px,#fffd00 145px,#ffe300 197px)"></i><i style="background:linear-gradient(90deg,#b6ff01 0px,#fffd00 144px,#ffe200 197px)"></i><i style="background:linear-gradient(90deg,#b7ff01 0px,#fffd00 143px,#ffe200 197px)"></i><i style="background:linear-gradient(90deg,#b7ff01 0px,#fffd00 142px,#ffe200 197px)"></i><i style="background:linear-gradient(90deg,#b7ff01 0px,#fffd00 141px,#ffe100 197px)"></i><i style="background:linear-gradient(90deg,#b8ff02 0px,#fffd00 140px,#ffe100 197px)"></i><i style="background:linear-gradient(90deg,#b8ff02 0px,#fffd00 139px,#ffe000 197px)"></i><i style="background:linear-gradient(90deg,#b8ff02 0px,#fffd00 138px,#ffe000 197px)"></i><i style="background:linear-gradient(90deg,#b9ff02 0px,#fffd00 137px,#ffdf00 197px)"></i><i style="background:linear-gradient(90deg,#b9ff02 0px,#feff00 132px,#ffdf00 197px)"></i><i style="background:linear-gradient(90deg,#baff03 0px,#ef0 102px,#fffd00 136px,#ffdf00 197px)"></i><i style="background:linear-gradient(90deg,#baff03 0px,#e8ff00 89px,#fffd00 135px,#ffde00 197px)"></i><i style="background:linear-gradient(90deg,#baff03 0px,#e5ff00 82px,#fffd00 134px,#ffde00 197px)"></i><i style="background:linear-gradient(90deg,#bbff03 0px,#e2ff00 77px,#fffd00 133px,#fd0 197px)"></i><i style="background:linear-gradient(90deg,#bbff03 0px,#e1ff00 74px,#fffd00 132px,#fd0 197px)"></i><i style="background:linear-gradient(90deg,#bcff04 0px,#e1ff00 72px,#fffd00 131px,#fd0 197px)"></i><i style="background:linear-gradient(90deg,#bcff04 0px,#e1ff00 72px,#fffd00 130px,#ffdc00 197px)"></i><i style="background:linear-gradient(90deg,#bcff04 0px,#e1ff00 72px,#fffd00 130px,#ffdc00 197px)"></i><i style="background:linear-gradient(90deg,#bdff04 0px,#e2ff00 72px,#fffd00 129px,#ffdb00 197px)"></i><i style="background:linear-gradient(90deg,#bdff04 0px,#e2ff00 72px,#fffd00 128px,#ffdb00 197px)"></i><i style="background:linear-gradient(90deg,#beff05 0px,#e3ff00 73px,#fffd00 127px,#ffda00 197px)"></i><i style="background:linear-gradient(90deg,#beff05 0px,#e4ff00 74px,#fffd00 126px,#ffda00 197px)"></i><i style="background:linear-gradient(90deg,#beff05 0px,#e5ff00 75px,#fffd00 125px,#ffda00 197px)"></i><i style="background:linear-gradient(90deg,#bfff05 0px,#e6ff00 76px,#fffd00 124px,#ffd900 197px)"></i><i style="background:linear-gradient(90deg,#bfff06 0px,#e7ff00 77px,#fffd00 123px,#ffd900 197px)"></i><i style="background:linear-gradient(90deg,#c0ff06 0px,#e8ff00 78px,#fffd00 122px,#ffd800 197px)"></i><i style="background:linear-gradient(90deg,#c0ff06 0px,#eaff00 80px,#fffd00 122px,#ffd800 197px)"></i><i style="background:linear-gradient(90deg,#c0ff06 0px,#ebff00 81px,#fffd00 121px,#ffd700 197px)"></i><i style="background:linear-gradient(90deg,#c1ff06 0px,#ecff00 82px,#fffd00 120px,#ffd700 197px)"></i><i style="background:linear-gradient(90deg,#c1ff07 0px,#edff00 84px,#fffd00 119px,#ffd700 197px)"></i><i style="background:linear-gradient(90deg,#c2ff07 0px,#efff00 86px,#fffd00 118px,#ffd600 197px)"></i><i style="background:linear-gradient(90deg,#c2ff07 0px,#f0ff00 87px,#fffd00 117px,#ffd600 197px)"></i><i style="background:linear-gradient(90deg,#c2ff07 0px,#f1ff00 88px,#fffd00 117px,#ffd500 197px)"></i><i style="background:linear-gradient(90deg,#c3ff08 0px,#f3ff00 90px,#fffd00 116px,#ffd500 197px)"></i><i style="background:linear-gradient(90deg,#c3ff08 0px,#f4ff00 91px,#fffd00 115px,#ffd500 197px)"></i><i style="background:linear-gradient(90deg,#c4ff08 0px,#f5ff00 93px,#fffd00 114px,#ffd400 197px)"></i><i style="background:linear-gradient(90deg,#c4ff08 0px,#f7ff00 95px,#fffc00 114px,#ffd400 197px)"></i><i style="background:linear-gradient(90deg,#c4ff08 0px,#f8ff00 96px,#fffc00 113px,#ffd300 197px)"></i><i style="background:linear-gradient(90deg,#c5ff09 0px,#faff00 98px,#fffc00 113px,#ffd300 197px)"></i><i style="background:linear-gradient(90deg,#c5ff09 0px,#fbff00 100px,#fffa00 115px,#ffd300 197px)"></i><i style="background:linear-gradient(90deg,#c6ff09 0px,#fcff00 101px,#fff600 121px,#ffd200 197px)"></i><i style="background:linear-gradient(90deg,#c6ff09 0px,#feff00 103px,#ffd200 197px)"></i><i style="background:linear-gradient(90deg,#c6ff0a 0px,#fffe00 105px,#ffd100 197px)"></i><i style="background:linear-gradient(90deg,#c7ff0a 0px,#fffd00 106px,#ffd100 197px)"></i><i style="background:linear-gradient(90deg,#c7ff0a 0px,#fffd00 105px,#ffd000 197px)"></i><i style="background:linear-gradient(90deg,#c8ff0a 0px,#fffd00 104px,#ffd000 197px)"></i><i style="background:linear-gradient(90deg,#c8ff0a 0px,#fffd00 103px,#ffd000 197px)"></i><i style="background:linear-gradient(90deg,#c9ff0b 0px,#fffd00 103px,#ffcf00 197px)"></i><i style="background:linear-gradient(90deg,#c9ff0b 0px,#fffd00 102px,#ffcf00 197px)"></i><i style="background:linear-gradient(90deg,#c9ff0b 0px,#fffd00 101px,#ffce00 197px)"></i><i style="background:linear-gradient(90deg,#caff0b 0px,#fffd00 100px,#ffce00 197px)"></i><i style="background:linear-gradient(90deg,#caff0c 0px,#fffd00 99px,#ffce00 197px)"></i><i style="background:linear-gradient(90deg,#cbff0c 0px,#fffd00 98px,#ffcd00 197px)"></i><i style="background:linear-gradient(90deg,#cbff0c 0px,#fffd01 97px,#ffcd00 197px)"></i><i style="background:linear-gradient(90deg,#ccff0c 0px,#fffd01 96px,#ffcd00 196px,#fc0 197px)"></i><i style="background:linear-gradient(90deg,#ccff0c 0px,#fffd01 95px,#ffcd00 195px,#fc0 197px)"></i><i style="background:linear-gradient(90deg,#ccff0d 0px,#fffd02 95px,#fc0 195px,#fc0 197px)"></i><i style="background:linear-gradient(90deg,#cdff0d 0px,#fffd02 94px,#fc0 194px,#ffcb00 197px)"></i><i style="background:linear-gradient(90deg,#cdff0d 0px,#fffd02 93px,#fc0 193px,#ffcb00 197px)"></i><i style="background:linear-gradient(90deg,#ceff0d 0px,#fffd03 92px,#ffd200 178px,#ffca00 197px)"></i><i style="background:linear-gradient(90deg,#ceff0e 0px,#fffd03 91px,#ffd800 164px,#ffca00 197px)"></i><i style="background:linear-gradient(90deg,#cfff0e 0px,#fffd03 90px,#ffdb00 157px,#ffca00 197px)"></i><i style="background:linear-gradient(90deg,#cfff0e 0px,#fffd04 89px,#ffdc00 154px,#ffc900 197px)"></i><i style="background:linear-gradient(90deg,#cfff0e 0px,#fffd04 88px,#ffdc00 153px,#ffc900 197px)"></i><i style="background:linear-gradient(90deg,#d0ff0f 0px,#fffd04 87px,#ffdb00 153px,#ffc800 197px)"></i><i style="background:linear-gradient(90deg,#d0ff0f 0px,#fffd05 87px,#ffda00 154px,#ffc800 197px)"></i><i style="background:linear-gradient(90deg,#d1ff0f 0px,#fffd05 86px,#ffda00 154px,#ffc800 197px)"></i><i style="background:linear-gradient(90deg,#d1ff0f 0px,#fffd05 85px,#ffd900 155px,#ffc700 197px)"></i><i style="background:linear-gradient(90deg,#d2ff10 0px,#fffd06 84px,#ffd800 156px,#ffc700 197px)"></i><i style="background:linear-gradient(90deg,#d2ff10 0px,#fffd06 83px,#ffd700 157px,#ffc600 197px)"></i><i style="background:linear-gradient(90deg,#d3ff10 0px,#fffd06 82px,#ffd700 158px,#ffc600 197px)"></i><i style="background:linear-gradient(90deg,#d3ff10 0px,#fffd07 81px,#ffd600 159px,#ffc600 197px)"></i><i style="background:linear-gradient(90deg,#d3ff11 0px,#fffd07 80px,#ffd400 161px,#ffc500 197px)"></i><i style="background:linear-gradient(90deg,#d4ff11 0px,#fffd08 79px,#ffd300 162px,#ffc500 197px)"></i><i style="background:linear-gradient(90deg,#d4ff11 0px,#fffd08 78px,#ffd300 163px,#ffc400 197px)"></i><i style="background:linear-gradient(90deg,#d5ff11 0px,#fffd08 78px,#ffd100 165px,#ffc400 197px)"></i><i style="background:linear-gradient(90deg,#d5ff11 0px,#fffd09 77px,#ffd000 167px,#ffc400 197px)"></i><i style="background:linear-gradient(90deg,#d6ff12 0px,#fffd09 76px,#ffcf00 168px,#ffc300 197px)"></i><i style="background:linear-gradient(90deg,#d6ff12 0px,#fffd09 75px,#ffce00 170px,#ffc300 197px)"></i><i style="background:linear-gradient(90deg,#d7ff12 0px,#fffd0a 74px,#ffcd00 171px,#ffc300 197px)"></i><i style="background:linear-gradient(90deg,#d7ff12 0px,#fffd0a 73px,#ffcd00 171px,#ffc200 197px)"></i><i style="background:linear-gradient(90deg,#d7ff13 0px,#fffd0a 72px,#ffcd00 170px,#ffc200 197px)"></i><i style="background:linear-gradient(90deg,#d8ff13 0px,#fffd0b 71px,#ffcd00 169px,#ffc100 197px)"></i><i style="background:linear-gradient(90deg,#d8ff13 0px,#fffd0b 70px,#ffcd00 168px,#ffc100 197px)"></i><i style="background:linear-gradient(90deg,#d9ff13 0px,#fffd0b 70px,#fc0 168px,#ffc100 197px)"></i><i style="background:linear-gradient(90deg,#d9ff14 0px,#fffd0c 69px,#fc0 167px,#ffc000 197px)"></i><i style="background:linear-gradient(90deg,#daff14 0px,#fffd0c 68px,#ffcd00 165px,#ffc000 197px)"></i><i style="background:linear-gradient(90deg,#daff14 0px,#fffd0c 67px,#ffcd00 164px,#ffbf00 197px)"></i><i style="background:linear-gradient(90deg,#dbff14 0px,#fffd0d 66px,#ffcd01 163px,#ffbf00 197px)"></i><i style="background:linear-gradient(90deg,#dbff15 0px,#fffd0d 65px,#ffcd01 162px,#ffbf00 197px)"></i><i style="background:linear-gradient(90deg,#dcff15 0px,#fffd0d 64px,#ffcd01 161px,#ffbe00 197px)"></i><i style="background:linear-gradient(90deg,#dcff15 0px,#fffd0e 63px,#ffcd01 160px,#ffbe00 197px)"></i><i style="background:linear-gradient(90deg,#ddff15 0px,#fffd0e 62px,#ffcd02 159px,#ffbd00 197px)"></i><i style="background:linear-gradient(90deg,#ddff16 0px,#fffd0e 62px,#ffcc02 159px,#ffbd00 197px)"></i><i style="background:linear-gradient(90deg,#deff16 0px,#fffd0f 61px,#ffcc02 158px,#ffbd00 197px)"></i><i style="background:linear-gradient(90deg,#deff16 0px,#fffd0f 60px,#ffcc03 157px,#ffbc00 197px)"></i><i style="background:linear-gradient(90deg,#deff16 0px,#fffd10 59px,#ffcc03 156px,#ffbc00 197px)"></i><i style="background:linear-gradient(90deg,#dfff17 0px,#fffd10 58px,#ffcd03 154px,#ffbc00 197px)"></i><i style="background:linear-gradient(90deg,#dfff17 0px,#fffd10 57px,#ffcd04 153px,#fb0 197px)"></i><i style="background:linear-gradient(90deg,#e0ff17 0px,#fffd11 56px,#ffcd04 152px,#fb0 197px)"></i><i style="background:linear-gradient(90deg,#e0ff18 0px,#fffd11 55px,#ffcd04 151px,#ffba00 197px)"></i><i style="background:linear-gradient(90deg,#e1ff18 0px,#fffd11 54px,#ffcd05 150px,#ffba00 197px)"></i><i style="background:linear-gradient(90deg,#e1ff18 0px,#fffd12 54px,#ffcc05 150px,#ffba00 197px)"></i><i style="background:linear-gradient(90deg,#e2ff18 0px,#fffd12 53px,#ffcc05 149px,#ffb900 197px)"></i><i style="background:linear-gradient(90deg,#e2ff19 0px,#fffd12 52px,#ffcc05 148px,#ffb900 197px)"></i><i style="background:linear-gradient(90deg,#e3ff19 0px,#fffd13 51px,#ffcc06 147px,#ffb900 197px)"></i><i style="background:linear-gradient(90deg,#e3ff19 0px,#fffd13 50px,#ffcc06 146px,#ffb800 197px)"></i><i style="background:linear-gradient(90deg,#e4ff19 0px,#fffd14 49px,#ffcc06 145px,#ffb801 197px)"></i><i style="background:linear-gradient(90deg,#e4ff1a 0px,#fffd14 48px,#ffcd07 143px,#ffb701 197px)"></i><i style="background:linear-gradient(90deg,#e5ff1a 0px,#fffd14 47px,#ffcd07 142px,#ffb701 197px)"></i><i style="background:linear-gradient(90deg,#e5ff1a 0px,#fffd15 46px,#ffcd07 141px,#ffb701 197px)"></i><i style="background:linear-gradient(90deg,#e6ff1a 0px,#fffd15 46px,#ffcd08 141px,#ffb601 197px)"></i><i style="background:linear-gradient(90deg,#e6ff1b 0px,#fffd15 45px,#ffcd08 140px,#ffb602 197px)"></i><i style="background:linear-gradient(90deg,#e7ff1b 0px,#fffd16 44px,#ffcd08 139px,#ffb502 197px)"></i><i style="background:linear-gradient(90deg,#e7ff1b 0px,#fffd16 43px,#ffcd08 138px,#ffb502 197px)"></i><i style="background:linear-gradient(90deg,#e8ff1b 0px,#fffd17 42px,#ffcd09 137px,#ffb502 197px)"></i><i style="background:linear-gradient(90deg,#e8ff1c 0px,#fffd17 41px,#ffcd09 136px,#ffb402 197px)"></i></div>
<svg class="top" width="1556" height="858" viewBox="0 0 1556 858">
<text x="3.5" y="60.5" font-size="36" fill="#f0f0f0" textLength="312" lengthAdjust="spacingAndGlyphs" stroke="#323232" stroke-width=".75">Saturation Sweeps</text><text x="521" y="53.4" font-size="19" fill="#f0f0f0" textLength="57" lengthAdjust="spacingAndGlyphs">Levels:</text><text x="112.5" y="110.2" font-size="19" fill="#f0f0f0" textLength="101.5" lengthAdjust="spacingAndGlyphs">dE Formula:</text><text x="44" y="581" font-size="27" fill="#f0f0f0" textLength="218" lengthAdjust="spacingAndGlyphs">Avg dE2000: 5,17</text><text x="32.8" y="618.5" font-size="27" fill="#f0f0f0" textLength="241.5" lengthAdjust="spacingAndGlyphs">Max dE2000: 16,63</text><text x="10.4" y="663" font-size="27" fill="#f0f0f0" textLength="205" lengthAdjust="spacingAndGlyphs">Current Reading</text><text x="10.4" y="697" font-size="21.5" fill="#f0f0f0" textLength="95.5" lengthAdjust="spacingAndGlyphs">x: 0,4223</text><text x="158" y="697" font-size="21.5" fill="#f0f0f0" textLength="95.4" lengthAdjust="spacingAndGlyphs">y: 0,4911</text><text x="10.4" y="735" font-size="21.5" fill="#f0f0f0" textLength="89.5" lengthAdjust="spacingAndGlyphs">fL: 37,92</text><text x="10.4" y="767" font-size="21.5" fill="#f0f0f0" textLength="149" lengthAdjust="spacingAndGlyphs">cd/m²: 129,91</text><defs><linearGradient id="dd" x1="0" y1="0" x2="0" y2="1"><stop offset="0" stop-color="#616161"/><stop offset="1" stop-color="#474747"/></linearGradient></defs><rect x="220.8" y="92" width="126.4" height="24" rx="1.5" fill="url(#dd)" stroke="#3a3a3a"/><text x="226" y="110.5" font-size="15" fill="#ececec" textLength="32.5" lengthAdjust="spacingAndGlyphs">2000</text><path d="M333.3 102.5h8.4l-4.2 4.6z" fill="#050505"/><rect x="584.8" y="35.4" width="317.6" height="22.8" rx="1.5" fill="url(#dd)" stroke="#3a3a3a"/><text x="589.6" y="53.6" font-size="15" fill="#ececec" textLength="83" lengthAdjust="spacingAndGlyphs">20% Sweeps</text><path d="M889.5 44.5h8.4l-4.2 4.6z" fill="#050505"/>
<defs><linearGradient id="b00"><stop offset="0" stop-color="rgb(217,102,102)"/><stop offset=".22" stop-color="rgb(198,24,24)"/><stop offset=".7" stop-color="rgb(198,24,24)"/><stop offset="1" stop-color="rgb(99,12,12)"/></linearGradient><linearGradient id="b01"><stop offset="0" stop-color="rgb(110,204,110)"/><stop offset=".22" stop-color="rgb(36,178,36)"/><stop offset=".7" stop-color="rgb(36,178,36)"/><stop offset="1" stop-color="rgb(18,89,18)"/></linearGradient><linearGradient id="b02"><stop offset="0" stop-color="rgb(101,101,221)"/><stop offset=".22" stop-color="rgb(22,22,204)"/><stop offset=".7" stop-color="rgb(22,22,204)"/><stop offset="1" stop-color="rgb(11,11,102)"/></linearGradient><linearGradient id="b03"><stop offset="0" stop-color="rgb(106,209,209)"/><stop offset=".22" stop-color="rgb(30,186,186)"/><stop offset=".7" stop-color="rgb(30,186,186)"/><stop offset="1" stop-color="rgb(15,93,93)"/></linearGradient><linearGradient id="b04"><stop offset="0" stop-color="rgb(213,106,213)"/><stop offset=".22" stop-color="rgb(192,30,192)"/><stop offset=".7" stop-color="rgb(192,30,192)"/><stop offset="1" stop-color="rgb(96,15,96)"/></linearGradient><linearGradient id="b05"><stop offset="0" stop-color="rgb(218,218,113)"/><stop offset=".22" stop-color="rgb(200,200,40)"/><stop offset=".7" stop-color="rgb(200,200,40)"/><stop offset="1" stop-color="rgb(100,100,20)"/></linearGradient><linearGradient id="b10"><stop offset="0" stop-color="rgb(217,125,125)"/><stop offset=".22" stop-color="rgb(197,58,58)"/><stop offset=".7" stop-color="rgb(197,58,58)"/><stop offset="1" stop-color="rgb(98,29,29)"/></linearGradient><linearGradient id="b11"><stop offset="0" stop-color="rgb(133,206,133)"/><stop offset=".22" stop-color="rgb(70,181,70)"/><stop offset=".7" stop-color="rgb(70,181,70)"/><stop offset="1" stop-color="rgb(35,90,35)"/></linearGradient><linearGradient id="b12"><stop offset="0" stop-color="rgb(123,123,220)"/><stop offset=".22" stop-color="rgb(56,56,202)"/><stop offset=".7" stop-color="rgb(56,56,202)"/><stop offset="1" stop-color="rgb(28,28,101)"/></linearGradient><linearGradient id="b13"><stop offset="0" stop-color="rgb(129,210,210)"/><stop offset=".22" stop-color="rgb(64,188,188)"/><stop offset=".7" stop-color="rgb(64,188,188)"/><stop offset="1" stop-color="rgb(32,94,94)"/></linearGradient><linearGradient id="b14"><stop offset="0" stop-color="rgb(213,129,213)"/><stop offset=".22" stop-color="rgb(192,64,192)"/><stop offset=".7" stop-color="rgb(192,64,192)"/><stop offset="1" stop-color="rgb(96,32,96)"/></linearGradient><linearGradient id="b15"><stop offset="0" stop-color="rgb(218,218,135)"/><stop offset=".22" stop-color="rgb(199,199,74)"/><stop offset=".7" stop-color="rgb(199,199,74)"/><stop offset="1" stop-color="rgb(99,99,37)"/></linearGradient><linearGradient id="b20"><stop offset="0" stop-color="rgb(216,147,147)"/><stop offset=".22" stop-color="rgb(197,92,92)"/><stop offset=".7" stop-color="rgb(197,92,92)"/><stop offset="1" stop-color="rgb(98,46,46)"/></linearGradient><linearGradient id="b21"><stop offset="0" stop-color="rgb(155,208,155)"/><stop offset=".22" stop-color="rgb(104,185,104)"/><stop offset=".7" stop-color="rgb(104,185,104)"/><stop offset="1" stop-color="rgb(52,92,52)"/></linearGradient><linearGradient id="b22"><stop offset="0" stop-color="rgb(146,146,219)"/><stop offset=".22" stop-color="rgb(90,90,200)"/><stop offset=".7" stop-color="rgb(90,90,200)"/><stop offset="1" stop-color="rgb(45,45,100)"/></linearGradient><linearGradient id="b23"><stop offset="0" stop-color="rgb(151,212,212)"/><stop offset=".22" stop-color="rgb(98,190,190)"/><stop offset=".7" stop-color="rgb(98,190,190)"/><stop offset="1" stop-color="rgb(49,95,95)"/></linearGradient><linearGradient id="b24"><stop offset="0" stop-color="rgb(214,151,214)"/><stop offset=".22" stop-color="rgb(193,98,193)"/><stop offset=".7" stop-color="rgb(193,98,193)"/><stop offset="1" stop-color="rgb(96,49,96)"/></linearGradient><linearGradient id="b25"><stop offset="0" stop-color="rgb(217,217,158)"/><stop offset=".22" stop-color="rgb(198,198,108)"/><stop offset=".7" stop-color="rgb(198,198,108)"/><stop offset="1" stop-color="rgb(99,99,54)"/></linearGradient><linearGradient id="b30"><stop offset="0" stop-color="rgb(216,170,170)"/><stop offset=".22" stop-color="rgb(196,127,127)"/><stop offset=".7" stop-color="rgb(196,127,127)"/><stop offset="1" stop-color="rgb(98,63,63)"/></linearGradient><linearGradient id="b31"><stop offset="0" stop-color="rgb(178,211,178)"/><stop offset=".22" stop-color="rgb(139,188,139)"/><stop offset=".7" stop-color="rgb(139,188,139)"/><stop offset="1" stop-color="rgb(69,94,69)"/></linearGradient><linearGradient id="b32"><stop offset="0" stop-color="rgb(169,169,218)"/><stop offset=".22" stop-color="rgb(125,125,199)"/><stop offset=".7" stop-color="rgb(125,125,199)"/><stop offset="1" stop-color="rgb(62,62,99)"/></linearGradient><linearGradient id="b33"><stop offset="0" stop-color="rgb(174,213,213)"/><stop offset=".22" stop-color="rgb(133,192,192)"/><stop offset=".7" stop-color="rgb(133,192,192)"/><stop offset="1" stop-color="rgb(66,96,96)"/></linearGradient><linearGradient id="b34"><stop offset="0" stop-color="rgb(215,174,215)"/><stop offset=".22" stop-color="rgb(194,133,194)"/><stop offset=".7" stop-color="rgb(194,133,194)"/><stop offset="1" stop-color="rgb(97,66,97)"/></linearGradient><linearGradient id="b35"><stop offset="0" stop-color="rgb(217,217,181)"/><stop offset=".22" stop-color="rgb(197,197,143)"/><stop offset=".7" stop-color="rgb(197,197,143)"/><stop offset="1" stop-color="rgb(98,98,71)"/></linearGradient><linearGradient id="b40"><stop offset="0" stop-color="rgb(216,193,193)"/><stop offset=".22" stop-color="rgb(196,161,161)"/><stop offset=".7" stop-color="rgb(196,161,161)"/><stop offset="1" stop-color="rgb(98,80,80)"/></linearGradient><linearGradient id="b41"><stop offset="0" stop-color="rgb(201,213,201)"/><stop offset=".22" stop-color="rgb(173,192,173)"/><stop offset=".7" stop-color="rgb(173,192,173)"/><stop offset="1" stop-color="rgb(86,96,86)"/></linearGradient><linearGradient id="b42"><stop offset="0" stop-color="rgb(192,192,217)"/><stop offset=".22" stop-color="rgb(159,159,197)"/><stop offset=".7" stop-color="rgb(159,159,197)"/><stop offset="1" stop-color="rgb(79,79,98)"/></linearGradient><linearGradient id="b43"><stop offset="0" stop-color="rgb(197,214,214)"/><stop offset=".22" stop-color="rgb(167,194,194)"/><stop offset=".7" stop-color="rgb(167,194,194)"/><stop offset="1" stop-color="rgb(83,97,97)"/></linearGradient><linearGradient id="b44"><stop offset="0" stop-color="rgb(215,197,215)"/><stop offset=".22" stop-color="rgb(195,167,195)"/><stop offset=".7" stop-color="rgb(195,167,195)"/><stop offset="1" stop-color="rgb(97,83,97)"/></linearGradient><linearGradient id="b45"><stop offset="0" stop-color="rgb(216,216,203)"/><stop offset=".22" stop-color="rgb(196,196,177)"/><stop offset=".7" stop-color="rgb(196,196,177)"/><stop offset="1" stop-color="rgb(98,98,88)"/></linearGradient><linearGradient id="bw"><stop offset="0" stop-color="#fff"/><stop offset=".4" stop-color="#f4f4f4"/><stop offset="1" stop-color="#8a8a8a"/></linearGradient></defs><rect x="37.5" y="146.5" width="292.2" height="361.5" fill="#262626"/><g stroke="#949494" stroke-width="1.1"><line x1="75.9" y1="146.5" x2="75.9" y2="508"/><line x1="114.8" y1="146.5" x2="114.8" y2="508"/><line x1="153.7" y1="146.5" x2="153.7" y2="508"/><line x1="192.6" y1="146.5" x2="192.6" y2="508"/><line x1="231.5" y1="146.5" x2="231.5" y2="508"/><line x1="270.4" y1="146.5" x2="270.4" y2="508"/><line x1="309.3" y1="146.5" x2="309.3" y2="508"/><path d="M37.5 146.5H329.7V508H37.5Z" fill="none"/></g><g stroke="#c4c4c4" stroke-width="1.25"><line x1="37.4" y1="508.5" x2="37.4" y2="513.8"/><line x1="75.9" y1="508.5" x2="75.9" y2="513.8"/><line x1="114.8" y1="508.5" x2="114.8" y2="513.8"/><line x1="153.7" y1="508.5" x2="153.7" y2="513.8"/><line x1="192.6" y1="508.5" x2="192.6" y2="513.8"/><line x1="231.5" y1="508.5" x2="231.5" y2="513.8"/><line x1="270.4" y1="508.5" x2="270.4" y2="513.8"/><line x1="309.3" y1="508.5" x2="309.3" y2="513.8"/><line x1="31.3" y1="147" x2="37.5" y2="147"/><line x1="31.3" y1="207.25" x2="37.5" y2="207.25"/><line x1="31.3" y1="267.5" x2="37.5" y2="267.5"/><line x1="31.3" y1="327.75" x2="37.5" y2="327.75"/><line x1="31.3" y1="388" x2="37.5" y2="388"/><line x1="31.3" y1="448.25" x2="37.5" y2="448.25"/><line x1="31.3" y1="508.5" x2="37.5" y2="508.5"/></g><rect x="37.7" y="152.15" width="82.3" height="4.9" fill="url(#b00)" stroke="#000" stroke-width="1"/><rect x="37.7" y="158.55" width="111.3" height="4.9" fill="url(#b01)" stroke="#000" stroke-width="1"/><rect x="37.7" y="164.95" width="291.3" height="4.9" fill="url(#b02)" stroke="#000" stroke-width="1"/><rect x="37.7" y="171.35" width="43.3" height="4.9" fill="url(#b03)" stroke="#000" stroke-width="1"/><rect x="37.7" y="177.75" width="180.8" height="4.9" fill="url(#b04)" stroke="#000" stroke-width="1"/><rect x="37.7" y="184.15" width="66.3" height="4.9" fill="url(#b05)" stroke="#000" stroke-width="1"/><rect x="37.7" y="212.57" width="84.3" height="4.9" fill="url(#b10)" stroke="#000" stroke-width="1"/><rect x="37.7" y="218.97" width="94.3" height="4.9" fill="url(#b11)" stroke="#000" stroke-width="1"/><rect x="37.7" y="225.37" width="225.8" height="4.9" fill="url(#b12)" stroke="#000" stroke-width="1"/><rect x="37.7" y="231.77" width="33.3" height="4.9" fill="url(#b13)" stroke="#000" stroke-width="1"/><rect x="37.7" y="238.17" width="160.8" height="4.9" fill="url(#b14)" stroke="#000" stroke-width="1"/><rect x="37.7" y="244.57" width="54.3" height="4.9" fill="url(#b15)" stroke="#000" stroke-width="1"/><rect x="37.7" y="272.99" width="89.8" height="4.9" fill="url(#b20)" stroke="#000" stroke-width="1"/><rect x="37.7" y="279.39" width="83.3" height="4.9" fill="url(#b21)" stroke="#000" stroke-width="1"/><rect x="37.7" y="285.79" width="170.3" height="4.9" fill="url(#b22)" stroke="#000" stroke-width="1"/><rect x="37.7" y="292.19" width="27.3" height="4.9" fill="url(#b23)" stroke="#000" stroke-width="1"/><rect x="37.7" y="298.59" width="144.3" height="4.9" fill="url(#b24)" stroke="#000" stroke-width="1"/><rect x="37.7" y="304.99" width="43.3" height="4.9" fill="url(#b25)" stroke="#000" stroke-width="1"/><rect x="37.7" y="333.41" width="93.3" height="4.9" fill="url(#b30)" stroke="#000" stroke-width="1"/><rect x="37.7" y="339.81" width="66.3" height="4.9" fill="url(#b31)" stroke="#000" stroke-width="1"/><rect x="37.7" y="346.21" width="124.3" height="4.9" fill="url(#b32)" stroke="#000" stroke-width="1"/><rect x="37.7" y="352.61" width="22.3" height="4.9" fill="url(#b33)" stroke="#000" stroke-width="1"/><rect x="37.7" y="359.01" width="131.3" height="4.9" fill="url(#b34)" stroke="#000" stroke-width="1"/><rect x="37.7" y="365.41" width="29.3" height="4.9" fill="url(#b35)" stroke="#000" stroke-width="1"/><rect x="37.7" y="393.83" width="105.3" height="4.9" fill="url(#b40)" stroke="#000" stroke-width="1"/><rect x="37.7" y="400.23" width="37.3" height="4.9" fill="url(#b41)" stroke="#000" stroke-width="1"/><rect x="37.7" y="406.63" width="143.3" height="4.9" fill="url(#b42)" stroke="#000" stroke-width="1"/><rect x="37.7" y="413.03" width="39.3" height="4.9" fill="url(#b43)" stroke="#000" stroke-width="1"/><rect x="37.7" y="419.43" width="137.3" height="4.9" fill="url(#b44)" stroke="#000" stroke-width="1"/><rect x="37.7" y="425.83" width="27.3" height="4.9" fill="url(#b45)" stroke="#000" stroke-width="1"/><rect x="37.7" y="492.6" width="102.3" height="4.6" fill="url(#bw)" stroke="#000" stroke-width="1"/><text x="166" y="141" font-size="13" fill="#d8d8d8" text-anchor="middle" textLength="75" lengthAdjust="spacingAndGlyphs">DeltaE 2000</text><text x="36" y="182" font-size="13.2" fill="#d8d8d8" text-anchor="end">100%</text><text x="36" y="242.3" font-size="13.2" fill="#d8d8d8" text-anchor="end">80%</text><text x="36" y="302.6" font-size="13.2" fill="#d8d8d8" text-anchor="end">60%</text><text x="36" y="362.9" font-size="13.2" fill="#d8d8d8" text-anchor="end">40%</text><text x="36" y="423.2" font-size="13.2" fill="#d8d8d8" text-anchor="end">20%</text><text x="36" y="483.5" font-size="13.2" fill="#d8d8d8" text-anchor="end">100</text><text x="36.7" y="529" font-size="13.2" fill="#d8d8d8" text-anchor="middle">0</text><text x="75.6" y="529" font-size="13.2" fill="#d8d8d8" text-anchor="middle">2</text><text x="114.5" y="529" font-size="13.2" fill="#d8d8d8" text-anchor="middle">4</text><text x="153.4" y="529" font-size="13.2" fill="#d8d8d8" text-anchor="middle">6</text><text x="192.3" y="529" font-size="13.2" fill="#d8d8d8" text-anchor="middle">8</text><text x="231.2" y="529" font-size="13.2" fill="#d8d8d8" text-anchor="middle">10</text><text x="270.1" y="529" font-size="13.2" fill="#d8d8d8" text-anchor="middle">12</text><text x="309" y="529" font-size="13.2" fill="#d8d8d8" text-anchor="middle">14</text>
<defs><linearGradient id="yb" x1="0" y1="0" x2="0" y2="1"><stop offset="0" stop-color="#d6d54c"/><stop offset=".1" stop-color="#cbca1c"/><stop offset=".22" stop-color="#c5c402"/><stop offset=".55" stop-color="#c2c100"/><stop offset="1" stop-color="#605f00"/></linearGradient></defs><rect x="379.5" y="95" width="135" height="265" fill="#262626"/><g stroke="#949494" stroke-width="1.1"><path d="M379.5 360V94.8H514.5V360" fill="none"/><line x1="379.5" y1="96.1" x2="514.5" y2="96.1"/><line x1="379.5" y1="139" x2="514.5" y2="139"/><line x1="379.5" y1="184.2" x2="514.5" y2="184.2"/><line x1="379.5" y1="229.4" x2="514.5" y2="229.4"/><line x1="379.5" y1="272.2" x2="514.5" y2="272.2"/><line x1="379.5" y1="317.4" x2="514.5" y2="317.4"/><line x1="379.5" y1="360" x2="514.5" y2="360"/></g><g stroke="#c4c4c4" stroke-width="1.25"><line x1="379.5" y1="360.3" x2="379.5" y2="366"/><line x1="514.5" y1="360.3" x2="514.5" y2="366"/><line x1="373.3" y1="96.1" x2="379.2" y2="96.1"/><line x1="373.3" y1="139" x2="379.2" y2="139"/><line x1="373.3" y1="184.2" x2="379.2" y2="184.2"/><line x1="373.3" y1="229.4" x2="379.2" y2="229.4"/><line x1="373.3" y1="272.2" x2="379.2" y2="272.2"/><line x1="373.3" y1="317.4" x2="379.2" y2="317.4"/><line x1="373.3" y1="360" x2="379.2" y2="360"/></g><rect x="393.7" y="228.15" width="106.6" height="27.7" fill="url(#yb)" stroke="#000" stroke-width="1.5"/><text x="434.5" y="90" font-size="13.4" fill="#d8d8d8" text-anchor="middle">Delta L</text><text x="373" y="101.2" font-size="13.2" fill="#d8d8d8" text-anchor="end">15</text><text x="373" y="146" font-size="13.2" fill="#d8d8d8" text-anchor="end">10</text><text x="373" y="189.5" font-size="13.2" fill="#d8d8d8" text-anchor="end">5</text><text x="373" y="234.5" font-size="13.2" fill="#d8d8d8" text-anchor="end">0</text><text x="373" y="278.7" font-size="13.2" fill="#d8d8d8" text-anchor="end">-5</text><text x="373" y="322.5" font-size="13.2" fill="#d8d8d8" text-anchor="end">-10</text><text x="373" y="367.7" font-size="13.2" fill="#d8d8d8" text-anchor="end">-15</text><text x="447" y="376" font-size="13.2" fill="#d8d8d8" text-anchor="middle">100%</text><rect x="564.5" y="95" width="135" height="265" fill="#262626"/><g stroke="#949494" stroke-width="1.1"><path d="M564.5 360V94.8H699.5V360" fill="none"/><line x1="564.5" y1="96.1" x2="699.5" y2="96.1"/><line x1="564.5" y1="139" x2="699.5" y2="139"/><line x1="564.5" y1="184.2" x2="699.5" y2="184.2"/><line x1="564.5" y1="229.4" x2="699.5" y2="229.4"/><line x1="564.5" y1="272.2" x2="699.5" y2="272.2"/><line x1="564.5" y1="317.4" x2="699.5" y2="317.4"/><line x1="564.5" y1="360" x2="699.5" y2="360"/></g><g stroke="#c4c4c4" stroke-width="1.25"><line x1="564.5" y1="360.3" x2="564.5" y2="366"/><line x1="699.5" y1="360.3" x2="699.5" y2="366"/><line x1="558.3" y1="96.1" x2="564.2" y2="96.1"/><line x1="558.3" y1="139" x2="564.2" y2="139"/><line x1="558.3" y1="184.2" x2="564.2" y2="184.2"/><line x1="558.3" y1="229.4" x2="564.2" y2="229.4"/><line x1="558.3" y1="272.2" x2="564.2" y2="272.2"/><line x1="558.3" y1="317.4" x2="564.2" y2="317.4"/><line x1="558.3" y1="360" x2="564.2" y2="360"/></g><rect x="578.7" y="228.15" width="106.6" height="46.7" fill="url(#yb)" stroke="#000" stroke-width="1.5"/><text x="619.5" y="90" font-size="13.4" fill="#d8d8d8" text-anchor="middle">Delta C</text><text x="558" y="101.2" font-size="13.2" fill="#d8d8d8" text-anchor="end">15</text><text x="558" y="146" font-size="13.2" fill="#d8d8d8" text-anchor="end">10</text><text x="558" y="189.5" font-size="13.2" fill="#d8d8d8" text-anchor="end">5</text><text x="558" y="234.5" font-size="13.2" fill="#d8d8d8" text-anchor="end">0</text><text x="558" y="278.7" font-size="13.2" fill="#d8d8d8" text-anchor="end">-5</text><text x="558" y="322.5" font-size="13.2" fill="#d8d8d8" text-anchor="end">-10</text><text x="558" y="367.7" font-size="13.2" fill="#d8d8d8" text-anchor="end">-15</text><text x="632" y="376" font-size="13.2" fill="#d8d8d8" text-anchor="middle">100%</text><rect x="749.7" y="95" width="136" height="265" fill="#262626"/><g stroke="#949494" stroke-width="1.1"><path d="M749.7 360V94.8H885.7V360" fill="none"/><line x1="749.7" y1="96.1" x2="885.7" y2="96.1"/><line x1="749.7" y1="139" x2="885.7" y2="139"/><line x1="749.7" y1="184.2" x2="885.7" y2="184.2"/><line x1="749.7" y1="229.4" x2="885.7" y2="229.4"/><line x1="749.7" y1="272.2" x2="885.7" y2="272.2"/><line x1="749.7" y1="317.4" x2="885.7" y2="317.4"/><line x1="749.7" y1="360" x2="885.7" y2="360"/></g><g stroke="#c4c4c4" stroke-width="1.25"><line x1="749.7" y1="360.3" x2="749.7" y2="366"/><line x1="885.7" y1="360.3" x2="885.7" y2="366"/><line x1="743.5" y1="96.1" x2="749.4" y2="96.1"/><line x1="743.5" y1="139" x2="749.4" y2="139"/><line x1="743.5" y1="184.2" x2="749.4" y2="184.2"/><line x1="743.5" y1="229.4" x2="749.4" y2="229.4"/><line x1="743.5" y1="272.2" x2="749.4" y2="272.2"/><line x1="743.5" y1="317.4" x2="749.4" y2="317.4"/><line x1="743.5" y1="360" x2="749.4" y2="360"/></g><rect x="764.2" y="228.15" width="106.1" height="29.2" fill="url(#yb)" stroke="#000" stroke-width="1.5"/><text x="804.4" y="90" font-size="13.4" fill="#d8d8d8" text-anchor="middle">Delta H</text><text x="743" y="101.2" font-size="13.2" fill="#d8d8d8" text-anchor="end">15</text><text x="743" y="146" font-size="13.2" fill="#d8d8d8" text-anchor="end">10</text><text x="743" y="189.5" font-size="13.2" fill="#d8d8d8" text-anchor="end">5</text><text x="743" y="234.5" font-size="13.2" fill="#d8d8d8" text-anchor="end">0</text><text x="743" y="278.7" font-size="13.2" fill="#d8d8d8" text-anchor="end">-5</text><text x="743" y="322.5" font-size="13.2" fill="#d8d8d8" text-anchor="end">-10</text><text x="743" y="367.7" font-size="13.2" fill="#d8d8d8" text-anchor="end">-15</text><text x="817" y="376" font-size="13.2" fill="#d8d8d8" text-anchor="middle">100%</text>
<rect x="348" y="385" width="555" height="152.5" fill="#000"/><rect x="367" y="391" width="93.2" height="124.5" fill="#c0c1a3"/><rect x="367" y="391" width="93.2" height="62.3" fill="#babda3"/><rect x="368.6" y="392.6" width="90" height="121.8" fill="none" stroke="#8c8c62" stroke-opacity=".6" stroke-width="1"/><rect x="367.5" y="391.5" width="92.2" height="124" fill="none" stroke="#f0f0e6" stroke-width="1.2"/><text x="413.6" y="530.3" font-size="10.9" fill="#f4f4f4" text-anchor="middle" textLength="21.3" lengthAdjust="spacingAndGlyphs" stroke="#f4f4f4" stroke-width=".35">20%</text><rect x="475.85" y="391" width="93.2" height="124.5" fill="#c1c087"/><rect x="475.85" y="391" width="93.2" height="62.3" fill="#bbba87"/><rect x="477.45" y="392.6" width="90" height="121.8" fill="none" stroke="#8c8c62" stroke-opacity=".6" stroke-width="1"/><rect x="476.35" y="391.5" width="92.2" height="124" fill="none" stroke="#f0f0e6" stroke-width="1.2"/><text x="522.45" y="530.3" font-size="10.9" fill="#f4f4f4" text-anchor="middle" textLength="21.3" lengthAdjust="spacingAndGlyphs" stroke="#f4f4f4" stroke-width=".35">40%</text><rect x="584.7" y="391" width="93.2" height="124.5" fill="#c1bf6c"/><rect x="584.7" y="391" width="93.2" height="62.3" fill="#bcb76f"/><rect x="586.3" y="392.6" width="90" height="121.8" fill="none" stroke="#8c8c62" stroke-opacity=".6" stroke-width="1"/><rect x="585.2" y="391.5" width="92.2" height="124" fill="none" stroke="#f0f0e6" stroke-width="1.2"/><text x="631.3" y="530.3" font-size="10.9" fill="#f4f4f4" text-anchor="middle" textLength="21.3" lengthAdjust="spacingAndGlyphs" stroke="#f4f4f4" stroke-width=".35">60%</text><rect x="693.55" y="391" width="93.2" height="124.5" fill="#c1c04b"/><rect x="693.55" y="391" width="93.2" height="62.3" fill="#bdb551"/><rect x="695.15" y="392.6" width="90" height="121.8" fill="none" stroke="#8c8c62" stroke-opacity=".6" stroke-width="1"/><rect x="694.05" y="391.5" width="92.2" height="124" fill="none" stroke="#f0f0e6" stroke-width="1.2"/><text x="740.15" y="530.3" font-size="10.9" fill="#f4f4f4" text-anchor="middle" textLength="21.3" lengthAdjust="spacingAndGlyphs" stroke="#f4f4f4" stroke-width=".35">80%</text><rect x="802.4" y="391" width="93.2" height="124.5" fill="#c4c100"/><rect x="802.4" y="391" width="93.2" height="62.3" fill="#bdb021"/><rect x="804" y="392.6" width="90" height="121.8" fill="none" stroke="#8c8c62" stroke-opacity=".6" stroke-width="1"/><rect x="802.9" y="391.5" width="92.2" height="124" fill="none" stroke="#f0f0e6" stroke-width="1.2"/><text x="849" y="530.3" font-size="10.9" fill="#f4f4f4" text-anchor="middle" textLength="27.8" lengthAdjust="spacingAndGlyphs" stroke="#f4f4f4" stroke-width=".35">100%</text><text transform="translate(360.6,418.8) rotate(-90)" font-size="10.6" font-weight="bold" fill="#f2f2f2" text-anchor="middle">Actual</text><text transform="translate(360.6,488) rotate(-90)" font-size="10.6" font-weight="bold" fill="#f2f2f2" text-anchor="middle">Target</text>
<clipPath id="pc"><rect x="952" y="56" width="599.5" height="461"/></clipPath><path d="M1208.2 503.6L1207.4 503.7L1206.9 504.1L1204.8 503.9L1200.4 501.2L1193.6 495.8L1157.5 465.7L1145.8 455.4L1135.8 446.1L1124.7 434.8L1116.1 425.3L1106.4 413.8L1095.7 400.3L1084.4 385.2L1072.5 368.3L1060.1 349.7L1047.4 329.5L1034.6 308.2L1021.9 286.4L1009.8 264.2L1004.0 253.0L998.6 242.0L988.7 220.5L980.1 200.1L972.6 180.9L966.4 163.4L961.6 147.8L958.0 134.1L955.5 122.2L953.9 111.8L953.4 103.0L953.7 95.4L954.1 91.9L955.6 85.8L957.8 80.7L959.2 78.5L962.4 74.7L966.2 71.7L968.3 70.5L972.7 68.6L980.0 66.9L987.9 66.0L999.1 65.6L1016.2 65.7L1031.0 66.4L1050.4 67.9L1083.6 71.1L1138.2 77.1L1573.8 127.2Z M1076.0 84.5L1401.3 114.4L1127.0 395.2Z" fill="#000" fill-opacity=".375" fill-rule="evenodd" clip-path="url(#pc)"/><g stroke="#a6a6a6" stroke-width="1.3"><path d="M951.5 517.3V55.5H1551.4V517.3Z" fill="none"/></g><g stroke="#c4c4c4" stroke-width="1.5"><line x1="946" y1="517.2" x2="951.2" y2="517.2"/><line x1="951.8" y1="517.6" x2="951.8" y2="523"/><line x1="946" y1="478.82" x2="951.2" y2="478.82"/><line x1="1001.67" y1="517.6" x2="1001.67" y2="523"/><line x1="946" y1="440.44" x2="951.2" y2="440.44"/><line x1="1051.54" y1="517.6" x2="1051.54" y2="523"/><line x1="946" y1="402.06" x2="951.2" y2="402.06"/><line x1="1101.41" y1="517.6" x2="1101.41" y2="523"/><line x1="946" y1="363.68" x2="951.2" y2="363.68"/><line x1="1151.28" y1="517.6" x2="1151.28" y2="523"/><line x1="946" y1="325.3" x2="951.2" y2="325.3"/><line x1="1201.15" y1="517.6" x2="1201.15" y2="523"/><line x1="946" y1="286.92" x2="951.2" y2="286.92"/><line x1="1251.02" y1="517.6" x2="1251.02" y2="523"/><line x1="946" y1="248.54" x2="951.2" y2="248.54"/><line x1="1300.89" y1="517.6" x2="1300.89" y2="523"/><line x1="946" y1="210.16" x2="951.2" y2="210.16"/><line x1="1350.76" y1="517.6" x2="1350.76" y2="523"/><line x1="946" y1="171.78" x2="951.2" y2="171.78"/><line x1="1400.63" y1="517.6" x2="1400.63" y2="523"/><line x1="946" y1="133.4" x2="951.2" y2="133.4"/><line x1="1450.5" y1="517.6" x2="1450.5" y2="523"/><line x1="946" y1="95.02" x2="951.2" y2="95.02"/><line x1="1500.37" y1="517.6" x2="1500.37" y2="523"/></g><text x="945.3" y="523.7" font-size="13.2" fill="#d8d8d8" text-anchor="end">0</text><text x="951.5" y="537.5" font-size="13.2" fill="#d8d8d8" text-anchor="middle">0</text><text x="945.3" y="483.72" font-size="13.2" fill="#d8d8d8" text-anchor="end">0,05</text><text x="1001.37" y="537.5" font-size="13.2" fill="#d8d8d8" text-anchor="middle">0,05</text><text x="945.3" y="445.34" font-size="13.2" fill="#d8d8d8" text-anchor="end">0,1</text><text x="1051.24" y="537.5" font-size="13.2" fill="#d8d8d8" text-anchor="middle">0,1</text><text x="945.3" y="406.96" font-size="13.2" fill="#d8d8d8" text-anchor="end">0,15</text><text x="1101.11" y="537.5" font-size="13.2" fill="#d8d8d8" text-anchor="middle">0,15</text><text x="945.3" y="368.58" font-size="13.2" fill="#d8d8d8" text-anchor="end">0,2</text><text x="1150.98" y="537.5" font-size="13.2" fill="#d8d8d8" text-anchor="middle">0,2</text><text x="945.3" y="330.2" font-size="13.2" fill="#d8d8d8" text-anchor="end">0,25</text><text x="1200.85" y="537.5" font-size="13.2" fill="#d8d8d8" text-anchor="middle">0,25</text><text x="945.3" y="291.82" font-size="13.2" fill="#d8d8d8" text-anchor="end">0,3</text><text x="1250.72" y="537.5" font-size="13.2" fill="#d8d8d8" text-anchor="middle">0,3</text><text x="945.3" y="253.44" font-size="13.2" fill="#d8d8d8" text-anchor="end">0,35</text><text x="1300.59" y="537.5" font-size="13.2" fill="#d8d8d8" text-anchor="middle">0,35</text><text x="945.3" y="215.06" font-size="13.2" fill="#d8d8d8" text-anchor="end">0,4</text><text x="1350.46" y="537.5" font-size="13.2" fill="#d8d8d8" text-anchor="middle">0,4</text><text x="945.3" y="176.68" font-size="13.2" fill="#d8d8d8" text-anchor="end">0,45</text><text x="1400.33" y="537.5" font-size="13.2" fill="#d8d8d8" text-anchor="middle">0,45</text><text x="945.3" y="138.3" font-size="13.2" fill="#d8d8d8" text-anchor="end">0,5</text><text x="1450.2" y="537.5" font-size="13.2" fill="#d8d8d8" text-anchor="middle">0,5</text><text x="945.3" y="99.92" font-size="13.2" fill="#d8d8d8" text-anchor="end">0,55</text><text x="1500.07" y="537.5" font-size="13.2" fill="#d8d8d8" text-anchor="middle">0,55</text><text x="1236" y="50.6" font-size="13.2" fill="#d8d8d8" text-anchor="middle" textLength="80" lengthAdjust="spacingAndGlyphs">CIE 1976 u'v'</text><rect x="1346.5" y="374.5" width="200" height="136" fill="none" stroke="#3c3c3c" stroke-width="2"/><path d="M1348 376H1545V496.0L1348 389.8Z" fill="#000" fill-opacity=".375"/><rect x="1347.7" y="375.7" width="197.6" height="133.4" fill="none" stroke="#8e8e8e" stroke-width="1"/><g fill="none" stroke="#fff" stroke-opacity=".88" stroke-width="1.5"><rect x="1068.7" y="77.3" width="13.4" height="13.4"/><rect x="1080.3" y="88.3" width="13.4" height="13.4"/><rect x="1091.9" y="100.2" width="13.4" height="13.4"/><rect x="1106.4" y="114.1" width="13.4" height="13.4"/><rect x="1122.3" y="129.4" width="13.4" height="13.4"/><rect x="1148.4" y="84.1" width="13.4" height="13.4"/><rect x="1146.1" y="96.4" width="13.4" height="13.4"/><rect x="1146.1" y="107.3" width="13.4" height="13.4"/><rect x="1145.2" y="119.5" width="13.4" height="13.4"/><rect x="1144.3" y="133.0" width="13.4" height="13.4"/><rect x="1394.4" y="107.2" width="13.4" height="13.4"/><rect x="1334.4" y="117.4" width="13.4" height="13.4"/><rect x="1283.3" y="126.4" width="13.4" height="13.4"/><rect x="1237.3" y="133.4" width="13.4" height="13.4"/><rect x="1187.4" y="142.4" width="13.4" height="13.4"/><rect x="1083.1" y="160.3" width="13.4" height="13.4"/><rect x="1094.2" y="157.3" width="13.4" height="13.4"/><rect x="1106.6" y="155.9" width="13.4" height="13.4"/><rect x="1118.5" y="153.9" width="13.4" height="13.4"/><rect x="1130.4" y="152.6" width="13.4" height="13.4"/><rect x="1249.3" y="255.3" width="13.4" height="13.4"/><rect x="1218.3" y="226.3" width="13.4" height="13.4"/><rect x="1194.3" y="202.3" width="13.4" height="13.4"/><rect x="1176.3" y="183.4" width="13.4" height="13.4"/><rect x="1158.3" y="165.4" width="13.4" height="13.4"/><rect x="1120.4" y="388.1" width="13.4" height="13.4"/><rect x="1127.4" y="308.2" width="13.4" height="13.4"/><rect x="1132.3" y="254.3" width="13.4" height="13.4"/><rect x="1136.3" y="212.3" width="13.4" height="13.4"/><rect x="1139.3" y="177.4" width="13.4" height="13.4"/><rect x="1438.3" y="435.3" width="13.4" height="13.4"/></g><rect x="1141.3" y="149.3" width="13.4" height="13.4" fill="none" stroke="#000" stroke-width="1.5"/><g stroke="#0a0a0a" stroke-width="1.05"><circle cx="1094.4" cy="87.4" r="4.0" fill="rgb(0,154,0)"/><circle cx="1103.4" cy="98.3" r="4.0" fill="rgb(74,182,74)"/><circle cx="1112.6" cy="110.4" r="4.0" fill="rgb(105,182,105)"/><circle cx="1121.6" cy="123.5" r="4.0" fill="rgb(129,182,129)"/><circle cx="1131.5" cy="137.4" r="4.0" fill="rgb(149,182,149)"/><circle cx="1161.5" cy="93.4" r="4.0" fill="rgb(182,182,0)"/><circle cx="1157.4" cy="105.6" r="4.0" fill="rgb(182,182,74)"/><circle cx="1154.6" cy="115.5" r="4.0" fill="rgb(182,182,105)"/><circle cx="1152.3" cy="127.1" r="4.0" fill="rgb(182,182,129)"/><circle cx="1148.4" cy="139.4" r="4.0" fill="rgb(182,182,149)"/><circle cx="1338.5" cy="112.6" r="4.0" fill="rgb(182,0,0)"/><circle cx="1300.5" cy="121.3" r="4.0" fill="rgb(182,74,74)"/><circle cx="1253.0" cy="130.3" r="4.0" fill="rgb(182,105,105)"/><circle cx="1217.6" cy="138.1" r="4.0" fill="rgb(182,129,129)"/><circle cx="1178.4" cy="147.4" r="4.0" fill="rgb(182,149,149)"/><circle cx="1097.5" cy="164.4" r="4.0" fill="rgb(0,182,182)"/><circle cx="1107.4" cy="162.1" r="4.0" fill="rgb(74,182,182)"/><circle cx="1116.6" cy="160.3" r="4.0" fill="rgb(105,182,182)"/><circle cx="1125.6" cy="157.6" r="4.0" fill="rgb(129,182,182)"/><circle cx="1134.6" cy="156.3" r="4.0" fill="rgb(149,182,182)"/><circle cx="1200.5" cy="231.4" r="4.0" fill="rgb(182,0,182)"/><circle cx="1186.6" cy="211.3" r="4.0" fill="rgb(182,74,182)"/><circle cx="1173.6" cy="193.3" r="4.0" fill="rgb(182,105,182)"/><circle cx="1163.6" cy="180.4" r="4.0" fill="rgb(182,129,182)"/><circle cx="1153.6" cy="166.6" r="4.0" fill="rgb(182,149,182)"/><circle cx="1101.5" cy="315.8" r="4.0" fill="rgb(0,0,154)"/><circle cx="1113.6" cy="269.9" r="4.0" fill="rgb(74,74,182)"/><circle cx="1122.5" cy="232.8" r="4.0" fill="rgb(105,105,182)"/><circle cx="1130.6" cy="203.4" r="4.0" fill="rgb(129,129,182)"/><circle cx="1138.5" cy="176.4" r="4.0" fill="rgb(149,149,182)"/><circle cx="1144.6" cy="155.4" r="4.0" fill="#fff"/><circle cx="1456.6" cy="479.3" r="4.0" fill="#b9b023"/></g>
<defs><linearGradient id="gr" x1="0" y1="0" x2="0" y2="1"><stop offset="0" stop-color="#ff6262"/><stop offset="1" stop-color="#ff0c0c"/></linearGradient><linearGradient id="gg" x1="0" y1="0" x2="0" y2="1"><stop offset="0" stop-color="#62b462"/><stop offset="1" stop-color="#0b7f0b"/></linearGradient><linearGradient id="gb" x1="0" y1="0" x2="0" y2="1"><stop offset="0" stop-color="#6262ff"/><stop offset=".75" stop-color="#0a0aff"/><stop offset="1" stop-color="#0000ff"/></linearGradient></defs><rect x="331.4" y="586.5" width="234.4" height="169.5" fill="#262626"/><g stroke="#949494" stroke-width="1.1"><path d="M331.4 756V586.5H565.8V756" fill="none"/><line x1="331.4" y1="588.6" x2="565.8" y2="588.6"/><line x1="331.4" y1="630.4" x2="565.8" y2="630.4"/><line x1="331.4" y1="672.2" x2="565.8" y2="672.2"/><line x1="331.4" y1="714.2" x2="565.8" y2="714.2"/><line x1="331.4" y1="756" x2="565.8" y2="756"/></g><g stroke="#c4c4c4" stroke-width="1.25"><line x1="331.4" y1="756.3" x2="331.4" y2="762"/><line x1="565.8" y1="756.3" x2="565.8" y2="762"/><line x1="325.4" y1="588.6" x2="331.1" y2="588.6"/><line x1="325.4" y1="630.4" x2="331.1" y2="630.4"/><line x1="325.4" y1="672.2" x2="331.1" y2="672.2"/><line x1="325.4" y1="714.2" x2="331.1" y2="714.2"/><line x1="325.4" y1="756" x2="331.1" y2="756"/></g><rect x="355.1" y="676.4" width="60.3" height="79.6" fill="url(#gr)" stroke="#000" stroke-width="1.3"/><rect x="416.9" y="689.7" width="60.3" height="66.3" fill="url(#gg)" stroke="#000" stroke-width="1.3"/><rect x="479.6" y="624.1" width="60.2" height="131.9" fill="url(#gb)" stroke="#000" stroke-width="1.3"/><text x="434.2" y="581.7" font-size="12.9" fill="#d8d8d8" text-anchor="middle" textLength="77" lengthAdjust="spacingAndGlyphs">RGB Balance</text><text x="323.7" y="593.9" font-size="13.2" fill="#d8d8d8" text-anchor="end">120</text><text x="323.7" y="635.7" font-size="13.2" fill="#d8d8d8" text-anchor="end">110</text><text x="323.7" y="677.5" font-size="13.2" fill="#d8d8d8" text-anchor="end">100</text><text x="323.7" y="720.1" font-size="13.2" fill="#d8d8d8" text-anchor="end">90</text><text x="323.7" y="763.5" font-size="13.2" fill="#d8d8d8" text-anchor="end">80</text><text x="448.4" y="770.5" font-size="13.2" fill="#d8d8d8" text-anchor="middle">100%</text>
<defs><linearGradient id="th" x1="0" y1="0" x2="0" y2="1"><stop offset="0" stop-color="#3e3e3e"/><stop offset=".48" stop-color="#303030"/><stop offset=".52" stop-color="#1c1c1c"/><stop offset="1" stop-color="#101010"/></linearGradient></defs><rect x="584.5" y="557.5" width="684" height="220.5" fill="#111"/><rect x="586" y="559" width="681" height="26" fill="url(#th)"/><text x="818.3" y="578" font-size="14.5" fill="#f4f4f4" text-anchor="middle" font-weight="bold" textLength="37.3" lengthAdjust="spacingAndGlyphs">20%</text><text x="918.15" y="578" font-size="14.5" fill="#f4f4f4" text-anchor="middle" font-weight="bold" textLength="37.3" lengthAdjust="spacingAndGlyphs">40%</text><text x="1018" y="578" font-size="14.5" fill="#f4f4f4" text-anchor="middle" font-weight="bold" textLength="37.3" lengthAdjust="spacingAndGlyphs">60%</text><text x="1117.85" y="578" font-size="14.5" fill="#f4f4f4" text-anchor="middle" font-weight="bold" textLength="37.3" lengthAdjust="spacingAndGlyphs">80%</text><text x="1217.7" y="578" font-size="14.5" fill="#f4f4f4" text-anchor="middle" font-weight="bold" textLength="48.8" lengthAdjust="spacingAndGlyphs">100%</text><rect x="586" y="585" width="681" height="24.1" fill="#424242"/><text x="602.8" y="602.2" font-size="15" fill="#f0f0f0" font-weight="bold" textLength="80.5" lengthAdjust="spacingAndGlyphs">x: CIE31</text><text x="774.5" y="602.2" font-size="15" fill="#ececec" textLength="63.6" lengthAdjust="spacingAndGlyphs" stroke="#ececec" stroke-width=".25">0,3313</text><text x="874.35" y="602.2" font-size="15" fill="#ececec" textLength="63.6" lengthAdjust="spacingAndGlyphs" stroke="#ececec" stroke-width=".25">0,3535</text><text x="974.2" y="602.2" font-size="15" fill="#ececec" textLength="63.6" lengthAdjust="spacingAndGlyphs" stroke="#ececec" stroke-width=".25">0,3755</text><text x="1074.05" y="602.2" font-size="15" fill="#ececec" textLength="63.6" lengthAdjust="spacingAndGlyphs" stroke="#ececec" stroke-width=".25">0,3973</text><text x="1173.9" y="602.2" font-size="15" fill="#ececec" textLength="63.6" lengthAdjust="spacingAndGlyphs" stroke="#ececec" stroke-width=".25">0,4223</text><rect x="586" y="609.1" width="681" height="24.1" fill="#7f7f7f"/><text x="602.8" y="626.3" font-size="15" fill="#f0f0f0" font-weight="bold" textLength="80.5" lengthAdjust="spacingAndGlyphs">y: CIE31</text><text x="774.5" y="626.3" font-size="15" fill="#ececec" textLength="63.6" lengthAdjust="spacingAndGlyphs" stroke="#ececec" stroke-width=".25">0,3648</text><text x="874.35" y="626.3" font-size="15" fill="#ececec" textLength="63.6" lengthAdjust="spacingAndGlyphs" stroke="#ececec" stroke-width=".25">0,3956</text><text x="974.2" y="626.3" font-size="15" fill="#ececec" textLength="63.6" lengthAdjust="spacingAndGlyphs" stroke="#ececec" stroke-width=".25">0,4261</text><text x="1074.05" y="626.3" font-size="15" fill="#ececec" textLength="63.6" lengthAdjust="spacingAndGlyphs" stroke="#ececec" stroke-width=".25">0,4564</text><text x="1173.9" y="626.3" font-size="15" fill="#ececec" textLength="63.6" lengthAdjust="spacingAndGlyphs" stroke="#ececec" stroke-width=".25">0,4911</text><rect x="586" y="633.2" width="681" height="24.1" fill="#424242"/><text x="602.8" y="650.4" font-size="15" fill="#f0f0f0" font-weight="bold" textLength="12.5" lengthAdjust="spacingAndGlyphs">Y</text><text x="774.5" y="650.4" font-size="15" fill="#ececec" textLength="87.2" lengthAdjust="spacingAndGlyphs" stroke="#ececec" stroke-width=".25">148,2830</text><text x="874.35" y="650.4" font-size="15" fill="#ececec" textLength="87.2" lengthAdjust="spacingAndGlyphs" stroke="#ececec" stroke-width=".25">142,7197</text><text x="974.2" y="650.4" font-size="15" fill="#ececec" textLength="87.2" lengthAdjust="spacingAndGlyphs" stroke="#ececec" stroke-width=".25">138,2956</text><text x="1074.05" y="650.4" font-size="15" fill="#ececec" textLength="87.2" lengthAdjust="spacingAndGlyphs" stroke="#ececec" stroke-width=".25">134,5736</text><text x="1173.9" y="650.4" font-size="15" fill="#ececec" textLength="87.2" lengthAdjust="spacingAndGlyphs" stroke="#ececec" stroke-width=".25">129,9089</text><rect x="586" y="657.3" width="681" height="24.1" fill="#7f7f7f"/><text x="602.8" y="674.5" font-size="15" fill="#f0f0f0" font-weight="bold" textLength="147" lengthAdjust="spacingAndGlyphs">Target x:CIE31</text><text x="774.5" y="674.5" font-size="15" fill="#ececec" textLength="63.6" lengthAdjust="spacingAndGlyphs" stroke="#ececec" stroke-width=".25">0,3344</text><text x="874.35" y="674.5" font-size="15" fill="#ececec" textLength="63.6" lengthAdjust="spacingAndGlyphs" stroke="#ececec" stroke-width=".25">0,3564</text><text x="974.2" y="674.5" font-size="15" fill="#ececec" textLength="63.6" lengthAdjust="spacingAndGlyphs" stroke="#ececec" stroke-width=".25">0,3773</text><text x="1074.05" y="674.5" font-size="15" fill="#ececec" textLength="63.6" lengthAdjust="spacingAndGlyphs" stroke="#ececec" stroke-width=".25">0,3969</text><text x="1173.9" y="674.5" font-size="15" fill="#ececec" textLength="63.6" lengthAdjust="spacingAndGlyphs" stroke="#ececec" stroke-width=".25">0,4193</text><rect x="586" y="681.4" width="681" height="24.1" fill="#424242"/><text x="602.8" y="698.6" font-size="15" fill="#f0f0f0" font-weight="bold" textLength="147" lengthAdjust="spacingAndGlyphs">Target y:CIE31</text><text x="774.5" y="698.6" font-size="15" fill="#ececec" textLength="63.6" lengthAdjust="spacingAndGlyphs" stroke="#ececec" stroke-width=".25">0,3648</text><text x="874.35" y="698.6" font-size="15" fill="#ececec" textLength="63.6" lengthAdjust="spacingAndGlyphs" stroke="#ececec" stroke-width=".25">0,4013</text><text x="974.2" y="698.6" font-size="15" fill="#ececec" textLength="63.6" lengthAdjust="spacingAndGlyphs" stroke="#ececec" stroke-width=".25">0,4358</text><text x="1074.05" y="698.6" font-size="15" fill="#ececec" textLength="63.6" lengthAdjust="spacingAndGlyphs" stroke="#ececec" stroke-width=".25">0,4682</text><text x="1173.9" y="698.6" font-size="15" fill="#ececec" textLength="63.6" lengthAdjust="spacingAndGlyphs" stroke="#ececec" stroke-width=".25">0,5053</text><rect x="586" y="705.5" width="681" height="24.1" fill="#7f7f7f"/><text x="602.8" y="722.7" font-size="15" fill="#f0f0f0" font-weight="bold" textLength="84" lengthAdjust="spacingAndGlyphs">Target Y</text><text x="774.5" y="722.7" font-size="15" fill="#ececec" textLength="87.2" lengthAdjust="spacingAndGlyphs" stroke="#ececec" stroke-width=".25">152,2876</text><text x="874.35" y="722.7" font-size="15" fill="#ececec" textLength="87.2" lengthAdjust="spacingAndGlyphs" stroke="#ececec" stroke-width=".25">149,6145</text><text x="974.2" y="722.7" font-size="15" fill="#ececec" textLength="87.2" lengthAdjust="spacingAndGlyphs" stroke="#ececec" stroke-width=".25">147,5606</text><text x="1074.05" y="722.7" font-size="15" fill="#ececec" textLength="87.2" lengthAdjust="spacingAndGlyphs" stroke="#ececec" stroke-width=".25">145,9487</text><text x="1173.9" y="722.7" font-size="15" fill="#ececec" textLength="87.2" lengthAdjust="spacingAndGlyphs" stroke="#ececec" stroke-width=".25">144,3904</text><rect x="586" y="729.6" width="681" height="24.1" fill="#424242"/><text x="602.8" y="746.8" font-size="15" fill="#f0f0f0" font-weight="bold" textLength="84" lengthAdjust="spacingAndGlyphs">ΔE 2000</text><text x="774.5" y="746.8" font-size="15" fill="#ececec" textLength="63.6" lengthAdjust="spacingAndGlyphs" stroke="#ececec" stroke-width=".25">1,4978</text><text x="874.35" y="746.8" font-size="15" fill="#ececec" textLength="63.6" lengthAdjust="spacingAndGlyphs" stroke="#ececec" stroke-width=".25">1,5892</text><text x="974.2" y="746.8" font-size="15" fill="#ececec" textLength="63.6" lengthAdjust="spacingAndGlyphs" stroke="#ececec" stroke-width=".25">2,3170</text><text x="1074.05" y="746.8" font-size="15" fill="#ececec" textLength="63.6" lengthAdjust="spacingAndGlyphs" stroke="#ececec" stroke-width=".25">2,8461</text><text x="1173.9" y="746.8" font-size="15" fill="#ececec" textLength="63.6" lengthAdjust="spacingAndGlyphs" stroke="#ececec" stroke-width=".25">3,5110</text><rect x="586" y="753.7" width="681" height="24.1" fill="#7f7f7f"/><text x="602.8" y="770.9" font-size="15" fill="#f0f0f0" font-weight="bold" textLength="67" lengthAdjust="spacingAndGlyphs">ΔE ITP</text><text x="774.5" y="770.9" font-size="15" fill="#ececec" textLength="63.6" lengthAdjust="spacingAndGlyphs" stroke="#ececec" stroke-width=".25">2,7533</text><text x="874.35" y="770.9" font-size="15" fill="#ececec" textLength="63.6" lengthAdjust="spacingAndGlyphs" stroke="#ececec" stroke-width=".25">4,3084</text><text x="974.2" y="770.9" font-size="15" fill="#ececec" textLength="63.6" lengthAdjust="spacingAndGlyphs" stroke="#ececec" stroke-width=".25">6,5238</text><text x="1074.05" y="770.9" font-size="15" fill="#ececec" textLength="63.6" lengthAdjust="spacingAndGlyphs" stroke="#ececec" stroke-width=".25">8,4413</text><text x="1173.9" y="770.9" font-size="15" fill="#ececec" textLength="74.5" lengthAdjust="spacingAndGlyphs" stroke="#ececec" stroke-width=".25">11,2715</text>
<defs><linearGradient id="tb" x1="0" y1="0" x2="0" y2="1"><stop offset="0" stop-color="#ababab"/><stop offset="1" stop-color="#686868"/></linearGradient><linearGradient id="ts" x1="0" y1="0" x2="0" y2="1"><stop offset="0" stop-color="#181818"/><stop offset="1" stop-color="#3c3c3c"/></linearGradient><linearGradient id="cb" x1="0" y1="0" x2="0" y2="1"><stop offset="0" stop-color="#6e6e6e"/><stop offset="1" stop-color="#9a9a9a"/></linearGradient></defs><linearGradient id="bbg" x1="0" y1="0" x2="0" y2="1"><stop offset="0" stop-color="#222"/><stop offset="1" stop-color="#383838"/></linearGradient><rect x="0" y="799.5" width="1556" height="59" fill="url(#bbg)"/><path d="M-5 860V804Q-5 800 -1 800H37.8Q41.8 800 41.8 804V860Z" fill="url(#tb)" stroke="#4a4a4a" stroke-width=".8"/><circle cx="19.5" cy="809.4" r="7.4" fill="url(#cb)"/><path d="M15.3 811.6h8.4l-4.2-4.6z" fill="#111"/><rect x="2" y="825.8" width="35.2" height="30.4" rx="3.5" fill="#ffff00" stroke="#8a8a20" stroke-width=".8"/><path d="M48.5 860V804Q48.5 800 52.5 800H194.2Q198.2 800 198.2 804V860Z" fill="url(#tb)" stroke="#4a4a4a" stroke-width=".8"/><rect x="53.3" y="805.4" width="140" height="35.7" rx="3.5" fill="#c0c1a3" stroke="#000" stroke-opacity=".3" stroke-width="1"/><text x="123.35" y="855.8" font-size="10.5" fill="#242424" text-anchor="middle">20%</text><path d="M200.4 860V804Q200.4 800 204.4 800H346.1Q350.1 800 350.1 804V860Z" fill="url(#tb)" stroke="#4a4a4a" stroke-width=".8"/><rect x="205.2" y="805.4" width="140" height="35.7" rx="3.5" fill="#c1c088" stroke="#000" stroke-opacity=".3" stroke-width="1"/><text x="275.25" y="855.8" font-size="10.5" fill="#242424" text-anchor="middle">40%</text><path d="M352.3 860V804Q352.3 800 356.3 800H498Q502 800 502 804V860Z" fill="url(#tb)" stroke="#4a4a4a" stroke-width=".8"/><rect x="357.1" y="805.4" width="140" height="35.7" rx="3.5" fill="#c1bf6b" stroke="#000" stroke-opacity=".3" stroke-width="1"/><text x="427.15" y="855.8" font-size="10.5" fill="#242424" text-anchor="middle">60%</text><path d="M504.2 860V804Q504.2 800 508.2 800H649.9Q653.9 800 653.9 804V860Z" fill="url(#tb)" stroke="#4a4a4a" stroke-width=".8"/><rect x="509" y="805.4" width="140" height="35.7" rx="3.5" fill="#c1c04c" stroke="#000" stroke-opacity=".3" stroke-width="1"/><text x="579.05" y="855.8" font-size="10.5" fill="#242424" text-anchor="middle">80%</text><path d="M656.1 860V804Q656.1 800 660.1 800H801.8Q805.8 800 805.8 804V860Z" fill="url(#ts)" stroke="#1c1c1c" stroke-width=".8"/><rect x="660.9" y="805.4" width="140" height="35.7" rx="3.5" fill="#c4c100" stroke="#000" stroke-opacity=".3" stroke-width="1"/><text x="730.95" y="855.8" font-size="10.5" fill="#fff" text-anchor="middle" font-weight="bold">100%</text><defs><linearGradient id="sb" x1="0" y1="0" x2="0" y2="1"><stop offset="0" stop-color="#cacaca"/><stop offset=".5" stop-color="#adadad"/><stop offset=".51" stop-color="#8e8e8e"/><stop offset="1" stop-color="#a2a2a2"/></linearGradient></defs><path d="M1239 860V804Q1239 800 1243 800H1283Q1287 800 1287 804V860Z" fill="url(#tb)" stroke="#4a4a4a" stroke-width=".8"/><line x1="1239" y1="818.2" x2="1287" y2="818.2" stroke="#4a4a4a" stroke-width="1.2"/><circle cx="1263.3" cy="809.3" r="7" fill="url(#cb)"/><path d="M1259.3 811.3h8l-4-4.4z" fill="#262626"/><rect x="1248.7" y="825.6" width="28.8" height="28.3" rx="4" fill="url(#sb)" stroke="#262626" stroke-width="2.4"/><rect x="1256.2" y="833.3" width="13.4" height="13.2" fill="#000"/><rect x="1256.2" y="833.3" width="13.4" height="6.4" fill="#2c2c2c"/><path d="M1288.2 830V804Q1288.2 800 1292.2 800H1562Q1566 800 1566 804V830Z" fill="url(#tb)" stroke="#4a4a4a" stroke-width=".8"/><line x1="1334.4" y1="800.5" x2="1334.4" y2="830" stroke="#3e3e3e" stroke-width="1.3"/><line x1="1379.4" y1="800.5" x2="1379.4" y2="830" stroke="#3e3e3e" stroke-width="1.3"/><line x1="1424.3" y1="800.5" x2="1424.3" y2="830" stroke="#3e3e3e" stroke-width="1.3"/><line x1="1469.6" y1="800.5" x2="1469.6" y2="830" stroke="#3e3e3e" stroke-width="1.3"/><line x1="1514.5" y1="800.5" x2="1514.5" y2="830" stroke="#3e3e3e" stroke-width="1.3"/><circle cx="1311.3" cy="815" r="10.2" fill="url(#cb)"/><circle cx="1356.9" cy="815" r="10.2" fill="url(#cb)"/><circle cx="1401.85" cy="815" r="10.2" fill="url(#cb)"/><circle cx="1446.95" cy="815" r="10.2" fill="url(#cb)"/><circle cx="1492.05" cy="815" r="10.2" fill="url(#cb)"/><circle cx="1537.5" cy="815" r="10.2" fill="url(#cb)"/><rect x="1307" y="810.6" width="8.6" height="8.6" fill="#242424"/><path d="M1353.1 809.8v10.2l9.6-5.1z" fill="#242424"/><g fill="none" stroke="#242424" stroke-width="1.9"><path d="M1399.25 810.6h-2.6v9h2.6M1404.45 810.6h2.6v9h-2.6"/></g><rect x="1399.75" y="814.2" width="1.7" height="1.9" fill="#242424"/><rect x="1402.35" y="814.2" width="1.7" height="1.9" fill="#242424"/><text x="1446.95" y="821.3" font-size="20" fill="#242424" text-anchor="middle" font-weight="bold" textLength="13.6" lengthAdjust="spacingAndGlyphs">∞</text><g fill="none" stroke="#242424" stroke-width="1.9"><path d="M1487.45 814a4.6 4.6 0 0 1 8-3"/><path d="M1496.65 816a4.6 4.6 0 0 1-8 3"/></g><path d="M1497.45 808.2v4.8h-4.8z M1486.65 821.8v-4.8h4.8z" fill="#242424"/><path d="M1288.2 860V835Q1288.2 831 1292.2 831H1419.7Q1423.7 831 1423.7 835V860Z" fill="url(#tb)" stroke="#4a4a4a" stroke-width=".8"/><path d="M1425 860V835Q1425 831 1429 831H1562Q1566 831 1566 835V860Z" fill="url(#tb)" stroke="#4a4a4a" stroke-width=".8"/><circle cx="1318.9" cy="846.6" r="9.8" fill="url(#cb)"/><circle cx="1532.5" cy="846.6" r="9.8" fill="url(#cb)"/><text x="1318.7" y="853" font-size="23" fill="#2a2a2a" text-anchor="middle">«</text><text x="1532.7" y="853" font-size="23" fill="#2a2a2a" text-anchor="middle">»</text><text x="1345.8" y="854" font-size="21.3" fill="#2e2e2e" textLength="49.8" lengthAdjust="spacingAndGlyphs" stroke="#2e2e2e" stroke-width=".45">Back</text><text x="1452.9" y="854" font-size="21.3" fill="#2e2e2e" textLength="51" lengthAdjust="spacingAndGlyphs" stroke="#2e2e2e" stroke-width=".45">Next</text>
</svg>
</body></html>
